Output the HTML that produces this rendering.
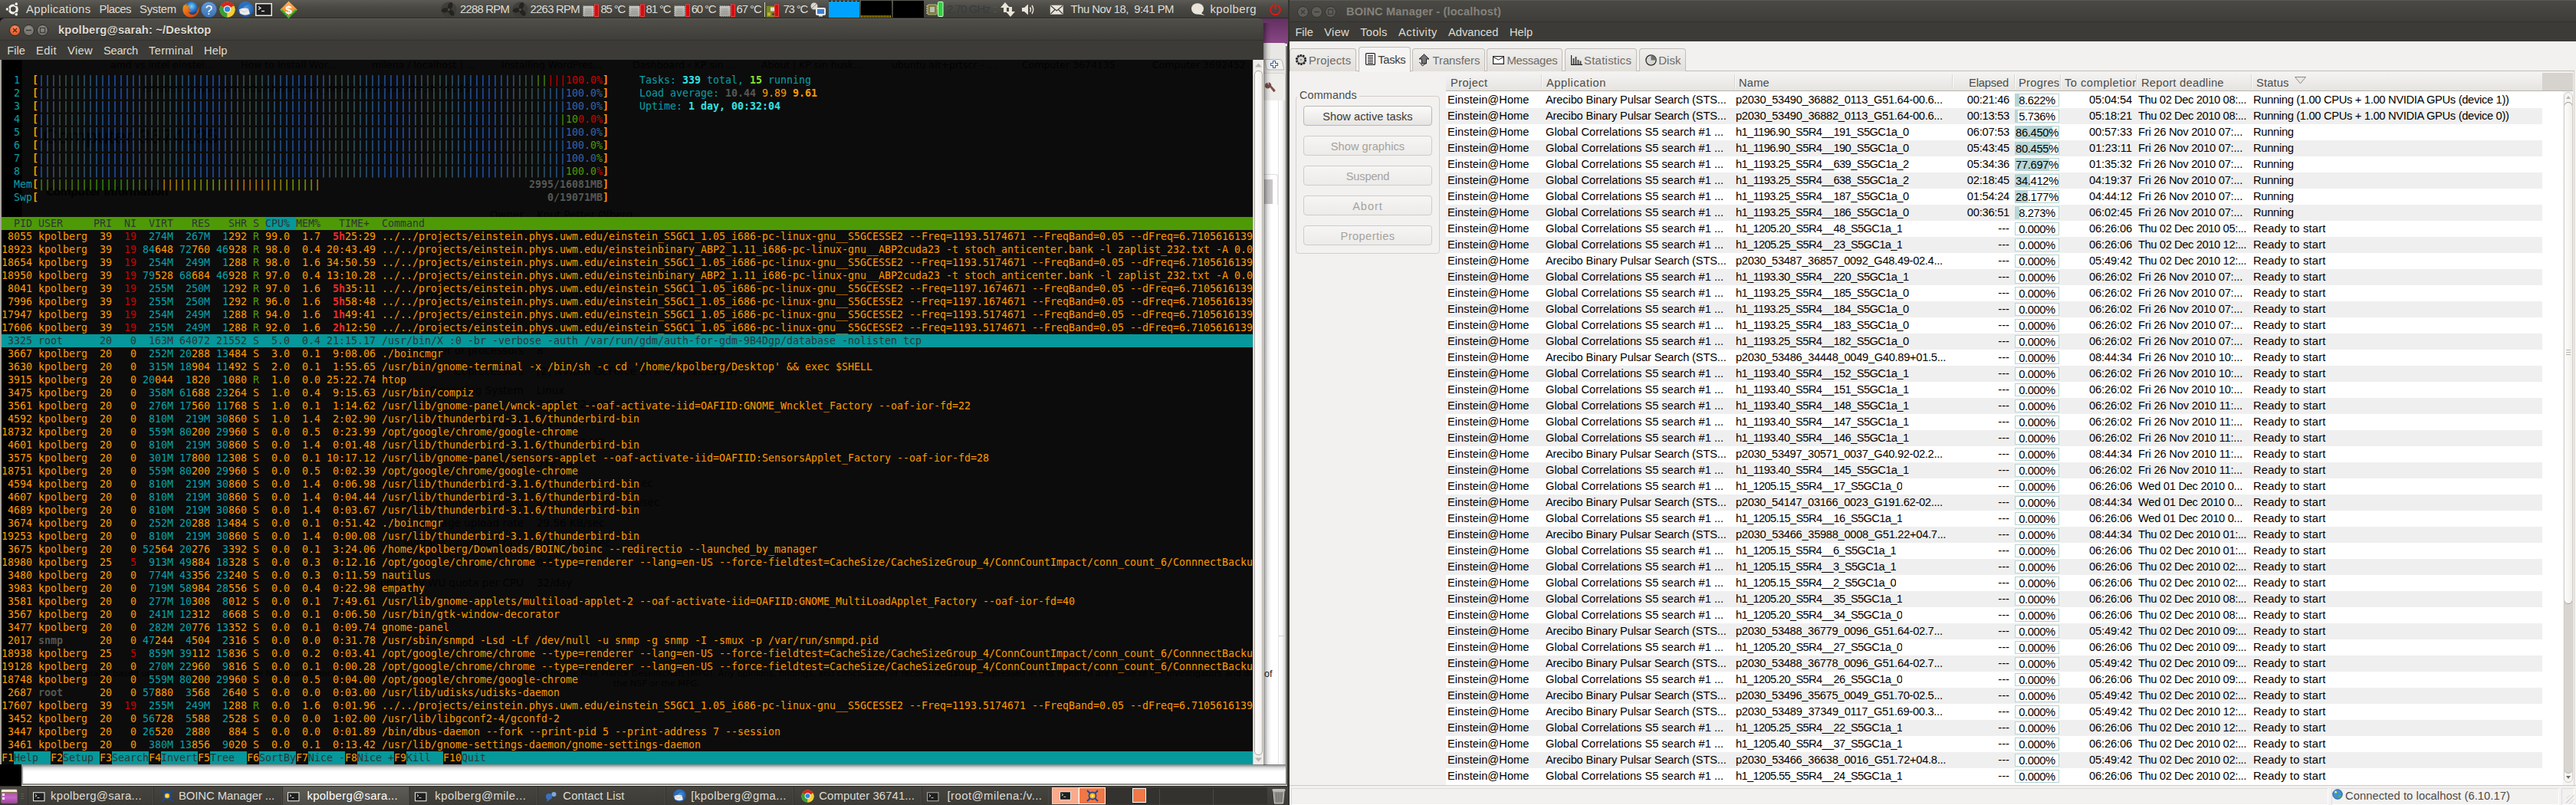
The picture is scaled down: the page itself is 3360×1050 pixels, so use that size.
<!DOCTYPE html>
<html><head><meta charset="utf-8"><title>Desktop</title>
<style>
*{box-sizing:border-box;margin:0;padding:0}
html,body{width:3360px;height:1050px;overflow:hidden;background:#fff}
body{position:relative;font-family:"Liberation Sans",sans-serif;font-size:14.67px;color:#000}
.abs{position:absolute}
#left{position:absolute;left:0;top:0;width:1680px;height:1050px;overflow:hidden;background:#fff}
#right{position:absolute;left:1680px;top:0;width:1680px;height:1050px;overflow:hidden;background:#f2f1f0}
/* top panel */
#tp{position:absolute;left:0;top:0;width:1680px;height:24px;background:linear-gradient(#5b5a54,#4a4943 40%,#3e3d39);border-bottom:1px solid #2b2a27;color:#dfdbd2;font-size:14.9px;line-height:25px;white-space:nowrap}
#tp span.t{position:absolute;top:0}
/* terminal window */
#tw{position:absolute;left:0;top:24px;width:1648px;height:973px;background:#3c3b37;border-radius:6px 6px 0 0;overflow:hidden}
#ttl{position:absolute;left:0;top:0;width:100%;height:28px;background:linear-gradient(#4f4e48,#3e3d39);border-top:1px solid #5e5d56;border-radius:6px 6px 0 0}
#ttl .tt{position:absolute;left:76px;top:0;line-height:28px;color:#dfdbd2;font-weight:bold;font-size:14.6px;text-shadow:0 1px 0 #222}
.wb{position:absolute;top:7px;width:15px;height:15px;border-radius:50%;border:1px solid #2b2a27}
#tmenu{position:absolute;left:0;top:28px;width:100%;height:26px;background:#3c3b37;color:#dfdbd2;line-height:26px;border-top:1px solid #33322f}
#tmenu span,#bmenu span{position:absolute;top:0}
#term{position:absolute;left:2px;top:54px;width:1632px;height:919px;padding-top:1px;background:linear-gradient(90deg,#000 26px,#0c0c0c 27px);color:#fd9a00;font-family:"DejaVu Sans Mono","Liberation Mono",monospace;font-size:13.30px;letter-spacing:-0.0058px;line-height:17px;white-space:pre;overflow:hidden}
#term .ln{height:17px;width:1632px;overflow:hidden;position:relative;z-index:1}
#ghost{position:absolute;left:0;top:0;width:1632px;height:919px;overflow:hidden;color:rgba(0,0,0,.8);font-family:"DejaVu Sans","Liberation Sans",sans-serif;letter-spacing:0;z-index:0;white-space:nowrap}
#ghost div{position:absolute;line-height:1.2}
#term .c{color:#08a0a6}
#term .c2{color:#25c0cc}
#term .C{color:#34e2e2;font-weight:bold}
#term .G{color:#8ae234;font-weight:bold}
#term .g{color:#4e9a06}
#term .r{color:#cc0000}
#term .R{color:#ef2929;font-weight:bold}
#term .b{color:#3465a4}
#term .y{color:#c4a000}
#term .K{color:#555753;font-weight:bold}
#term .B{font-weight:bold}
#term .hdl{background:#4e9a06;color:#2e3436}
#term .hs{background:#06989a;display:inline-block;height:17px;vertical-align:top}
#term .sel{background:#06989a;color:#2e3436}
#term .fkl{background:#06989a}
#term .fk{background:#0c0c0c;color:#fd9a00;display:inline-block;height:17px;vertical-align:top}
#term .fl{color:#2e3436}
/* bottom panel */
#bp{position:absolute;left:0;top:1025px;width:1680px;height:25px;background:linear-gradient(#45443e,#3c3b37);border-top:1px solid #2b2a27;color:#dfdbd2;line-height:25px;white-space:nowrap;font-size:14.9px}
.tb{position:absolute;top:0;height:25px;border-left:1px solid #33322e;border-right:1px solid #4a4943}
.tb span{position:absolute;top:0}
.tb.act{background:linear-gradient(#5d5c55,#4c4b46);color:#fff}
/* BOINC */
#btl{position:absolute;left:0;top:0;width:1680px;height:28px;background:linear-gradient(#4a4944,#3e3d39);border-top:1px solid #5a5953}
#btl .tt{position:absolute;left:76px;top:0;line-height:28px;color:#85827b;font-weight:bold;font-size:14.6px}
#bmenu{position:absolute;left:0;top:28px;width:1680px;height:26px;background:#3c3b37;color:#dfdbd2;line-height:26px;border-top:1px solid #33322f}
.tab{position:absolute;top:63px;height:30px;border:1px solid #c2bdb6;border-bottom:none;border-radius:4px 4px 0 0;background:linear-gradient(#f0efed,#e2dfdb);color:#6d6b67;line-height:31px;font-size:14.9px;white-space:nowrap}
.tab.act{top:61px;height:33px;background:#f5f4f3;color:#3c3b37;z-index:2;line-height:32px}
.tab span{position:absolute;top:0}
#tabline{position:absolute;left:2px;top:92px;width:1676px;height:1px;background:#c2bdb6}
#grp{position:absolute;left:10px;top:125px;width:188px;height:206px;border:1px solid #d3cfc9;border-radius:4px}
#grplbl{position:absolute;left:12px;top:114px;padding:0 3px;background:#f2f1f0;color:#4c4b47;font-size:14.4px;line-height:20px}
.btn{position:absolute;left:20px;width:168px;height:26px;border:1px solid #bcb7b0;border-radius:4px;background:linear-gradient(#fbfbfa,#e6e4e1);text-align:center;line-height:26px;color:#3c3b37;font-size:14.6px}
.btn.dis{color:#a5a29d;border-color:#d0ccc6;background:linear-gradient(#f6f5f4,#ecebe9)}
#thead{position:absolute;left:206px;top:95px;width:1470px;height:24px;background:linear-gradient(#f4f3f2,#e6e4e1);border-bottom:1px solid #b9b5ae;color:#4c4b47;line-height:26px;white-space:nowrap;overflow:hidden}
#thead span{position:absolute;top:0}
#thead i{position:absolute;top:2px;width:1px;height:19px;background:#d9d6d1;border-right:1px solid #fafafa;box-sizing:content-box}
#tbody{position:absolute;left:206px;top:119px;width:1457px;height:905px;background:#fff;overflow:hidden}
.tr{position:absolute;left:0;width:1430px;height:21px;line-height:21px;white-space:nowrap;font-size:14.67px;color:#000}
.tr.odd{background:#efefef}
.tr span{position:absolute;top:0;height:21px;overflow:hidden}
.c1{left:2px}.c2{left:130px}.c3{left:378px}
.c4{left:660px;width:75px;text-align:right}
.c5{left:742px;width:58px;height:17px!important;top:2px!important;border:1px solid #b4d4d2;background:#fff;line-height:17px}
.c5 i{position:absolute;left:0;top:0;height:15px;background:#b9d6d6}
.c5 b{position:absolute;left:0;top:0;width:56px;text-align:center;font-weight:normal;line-height:16px}
.c6{left:800px;width:95px;text-align:right}
.c7{left:903px}.c8{left:1053px}
#sbar{position:absolute;left:0;top:1024px;width:1680px;height:26px;border-top:1px solid #cfcbc5;background:#f2f1f0;color:#4c4b47}
</style></head><body><svg width="0" height="0" style="position:absolute"><defs>
<radialGradient id="gFx" cx="55%" cy="35%" r="60%"><stop offset="0" stop-color="#7fd3f7"></stop><stop offset=".5" stop-color="#2a7fd0"></stop><stop offset="1" stop-color="#12327a"></stop></radialGradient>
<linearGradient id="gFo" x1="0" y1="0" x2="1" y2="1"><stop offset="0" stop-color="#f9a01b"></stop><stop offset=".5" stop-color="#e8600f"></stop><stop offset="1" stop-color="#c93a08"></stop></linearGradient>
<linearGradient id="gHelp" x1="0" y1="0" x2="0" y2="1"><stop offset="0" stop-color="#6a9bd4"></stop><stop offset="1" stop-color="#3a72b5"></stop></linearGradient>
<radialGradient id="gTb" cx="50%" cy="40%" r="60%"><stop offset="0" stop-color="#4f9be0"></stop><stop offset="1" stop-color="#1b4f9a"></stop></radialGradient>
<linearGradient id="gDol" x1="0" y1="0" x2="0" y2="1"><stop offset="0" stop-color="#fbb462"></stop><stop offset="1" stop-color="#f07a12"></stop></linearGradient>
<linearGradient id="gChip" x1="0" y1="0" x2="0" y2="1"><stop offset="0" stop-color="#c4c4c0"></stop><stop offset="1" stop-color="#9d9d98"></stop></linearGradient>
</defs></svg>
<div id="left">
  <!-- area behind/right of terminal -->
  <div class="abs" style="left:0;top:24px;width:40px;height:12px;background:#1c0d19"></div>
  <div class="abs" style="left:1640px;top:24px;width:40px;height:33px;background:linear-gradient(#62305f,#8a4787)"></div>
  <div class="abs" style="left:1648px;top:56px;width:30px;height:969px;background:#e9e7e4;border-radius:0 4px 0 0"></div>
  <div class="abs" style="left:1648px;top:95px;width:28.5px;height:37px;background:#efedea;border:1px solid #d8d5d0;border-left:none;border-radius:0 4px 0 0"></div>
  <div class="abs" style="left:1648px;top:131px;width:28.5px;height:892px;background:#fff"></div>
  <div class="abs" style="left:1668px;top:131px;width:8.5px;height:892px;background:linear-gradient(90deg,rgba(0,0,0,0),rgba(0,0,0,.04) 50%,rgba(0,0,0,.22))"></div><div class="abs" style="left:1666.5px;top:131px;width:1px;height:892px;background:#e4e4e4"></div><div class="abs" style="left:1676.5px;top:60px;width:2.5px;height:964px;background:#7f7d7a"></div>
  <div class="abs" style="left:1679px;top:57px;width:1px;height:968px;background:#34332f"></div>
  <svg class="abs" style="left:1649px;top:76px" width="27" height="16" viewBox="0 0 27 16"><path d="M.5 1.500000H20Q22.500000 1.500000 23.500000 4L26 15H5Q3 15 2.500000 12.500000Z" fill="#f3f2f0" stroke="#bab6af" stroke-width="1"></path><path d="M11.5 3.5H14.5V6.5H17.5V9.5H14.5V12.5H11.5V9.5H8.5V6.5H11.5Z" fill="#f7f9fc" stroke="#3465a4" stroke-width="1.1" stroke-linejoin="round"></path></svg>
  <svg class="abs" style="left:1650px;top:107px" width="14" height="15" viewBox="0 0 14 15"><path d="M3 1.500000A3.200000 3.200000 0 1 0 6.500000 6L11.500000 12.500000 13 11 7.500000 5A3.200000 3.200000 0 0 0 5 1L5.500000 3.500000 3.500000 4.500000Z" fill="#7b5048" stroke="#7b5048" stroke-width="1.200000" stroke-linejoin="round"></path></svg>
  <div class="abs" style="left:1648px;top:227px;width:19px;height:40px;border:1px solid #e1dfdc;border-left:none;border-bottom:none;border-radius:0 3px 0 0"></div>
  <div class="abs" style="left:1649px;top:234px;width:11px;height:32px;background:#c9c8c6"></div>
  <div class="abs" style="left:1649px;top:871px;font-size:12.5px;color:#222;line-height:16px">of</div>
  <div class="abs" style="left:1668px;top:829px;width:8px;height:1px;background:#cfcfcf"></div>
  <div class="abs" style="left:0;top:997px;width:1677px;height:26px;background:#fff"></div>
  <div class="abs" style="left:0;top:1022px;width:1678px;height:2px;background:#8d8b86"></div>
  <div class="abs" style="left:0;top:997px;width:28px;height:28px;background:#000"></div>
  <div class="abs" style="left:28px;top:997px;width:2px;height:26px;background:#9a9894"></div>
  <div class="abs" style="left:30px;top:997px;width:1647px;height:9px;background:linear-gradient(rgba(0,0,0,.5),rgba(0,0,0,.12) 50%,rgba(0,0,0,0))"></div>
  <div class="abs" style="left:1648px;top:30px;width:10px;height:968px;background:linear-gradient(90deg,rgba(0,0,0,.42),rgba(0,0,0,.1) 55%,rgba(0,0,0,0))"></div>

  <div id="tp">
<svg class="abs" style="left:7px;top:2px" width="20" height="20" viewBox="0 0 20 20"><circle cx="10.3" cy="10" r="5" fill="none" stroke="#f3f1ec" stroke-width="3.1"></circle><circle cx="2.60" cy="10.00" r="2.7" fill="#4b4a44"></circle><circle cx="14.15" cy="3.33" r="2.7" fill="#4b4a44"></circle><circle cx="14.15" cy="16.67" r="2.7" fill="#4b4a44"></circle><circle cx="2.40" cy="10.00" r="1.8" fill="#f3f1ec"></circle><circle cx="14.25" cy="3.16" r="1.8" fill="#f3f1ec"></circle><circle cx="14.25" cy="16.84" r="1.8" fill="#f3f1ec"></circle></svg>
<svg class="abs" style="left:236.5px;top:1px" width="24" height="22" viewBox="0 0 24 22"><circle cx="12" cy="10" r="9" fill="url(#gFx)"></circle><path d="M3.5 4.5C1 8 0.5 13.5 3.5 17.5 7 22 14 22.5 18.5 19.5 22.5 16.5 23.5 11 22 7 22 10 21 12 19.5 13.5 20 16 17 18.5 13.5 18 10.5 17.5 9 15.5 9 14c1.5 1 3.5 .5 5-.5-2 0-4.5-1-5-3.5-.5-2 .5-3 1.5-4-1.500000-.5-3.500000 0-4.500000 1 0-1.500000 .5-2.500000 1-3.500000-1.500000 .5-2.500000 1.500000-3.500000 3z" fill="url(#gFo)"></path></svg>
<svg class="abs" style="left:261.5px;top:1.5px" width="21" height="21" viewBox="0 0 21 21"><circle cx="10.5" cy="10.5" r="10.2" fill="url(#gHelp)" stroke="#2f5f9c" stroke-width=".6"></circle><text x="10.5" y="16.5" font-family="Liberation Sans,sans-serif" font-size="17" fill="#fff" text-anchor="middle">?</text></svg>
<svg class="abs" style="left:285.5px;top:1.5px" width="21" height="21" viewBox="0 0 21 21"><circle cx="10.5" cy="10.5" r="10" fill="#f5d33a"></circle><path d="M10.500000 10.500000L1.840000 5.500000A10 10 0 0 1 19.160000 5.500000Z" fill="#d8241c"></path><path d="M10.500000 10.500000L1.840000 5.500000A10 10 0 0 0 10.500000 20.500000Z" fill="#3a9e38"></path><path d="M10.5 10.5L19.16 5.5A10 10 0 0 1 10.5 20.5Z" fill="#f3cf2d"></path><circle cx="10.5" cy="10" r="4.8" fill="#f2f2f2"></circle><circle cx="10.5" cy="10" r="3.6" fill="#2f86e0"></circle></svg>
<svg class="abs" style="left:308.5px;top:1px" width="22" height="22" viewBox="0 0 22 22"><circle cx="11.5" cy="11" r="10.3" fill="url(#gTb)"></circle><path d="M3 9C6 3 14 1 19 5 14 4 9 6 8 10Z" fill="#2a6cc0"></path><path d="M3 11.500000Q8 8 15 10.500000L17 17Q10 20.500000 4 16.500000Z" fill="#efece6"></path><path d="M3 11.500000L10 15 15 10.500000" fill="none" stroke="#c9c4bb" stroke-width=".8"></path></svg>
<svg class="abs" style="left:333px;top:4px" width="22" height="17" viewBox="0 0 22 17"><rect x=".75" y=".75" width="20.5" height="15.5" fill="#1e1e1e" stroke="#e8e8e6" stroke-width="1.5"></rect><path d="M4 4.500000L7 6.500000 4 8.500000" fill="none" stroke="#f2f2f2" stroke-width="1.300000"></path><path d="M8 10.500000H12" stroke="#f2f2f2" stroke-width="1.300000"></path></svg>
<svg class="abs" style="left:364.5px;top:0.5px" width="23" height="23.5" viewBox="0 0 23 23.5"><path d="M11.5 .5L22.5 11.5 11.5 22 .5 11.5Z" fill="url(#gDol)" stroke="#d96a0e" stroke-width=".5"></path><path d="M.6 12.6L3 11 11.5 19.5 20 11 22.4 12.6 11.5 23Z" fill="#46b52e"></path><path d="M2.5 13.500000L4 15M5 16L6.500000 17.500000M7.500000 18.500000L9 20M14 20L15.500000 18.500000M16.500000 17.500000L18 16M19 15L20.500000 13.500000" stroke="#1f7a12" stroke-width=".9"></path><text x="11.5" y="17" font-family="Liberation Sans,sans-serif" font-weight="bold" font-size="15.5" fill="#fff" text-anchor="middle">$</text></svg>
<svg class="abs" style="left:575px;top:2px" width="21" height="21" viewBox="0 0 21 21"><circle cx="10.5" cy="10.5" r="10" fill="#3a3935" opacity=".7"></circle><g fill="#24231f"><ellipse cx="10.5" cy="5.5" rx="3" ry="5" transform="rotate(20 10.5 10.5)"></ellipse><ellipse cx="10.5" cy="5.500000" rx="3" ry="5" transform="rotate(140 10.500000 10.500000)"></ellipse><ellipse cx="10.500000" cy="5.500000" rx="3" ry="5" transform="rotate(260 10.500000 10.500000)"></ellipse></g><circle cx="10.5" cy="10.5" r="1.5" fill="#55544f"></circle></svg>
<svg class="abs" style="left:668px;top:2px" width="21" height="21" viewBox="0 0 21 21"><circle cx="10.5" cy="10.5" r="10" fill="#3a3935" opacity=".7"></circle><g fill="#24231f"><ellipse cx="10.5" cy="5.5" rx="3" ry="5" transform="rotate(20 10.5 10.5)"></ellipse><ellipse cx="10.5" cy="5.500000" rx="3" ry="5" transform="rotate(140 10.500000 10.500000)"></ellipse><ellipse cx="10.500000" cy="5.500000" rx="3" ry="5" transform="rotate(260 10.500000 10.500000)"></ellipse></g><circle cx="10.5" cy="10.5" r="1.5" fill="#55544f"></circle></svg>
<svg class="abs" style="left:760px;top:5px" width="21" height="18" viewBox="0 0 21 18"><rect x="1" y="3" width="13" height="13" fill="url(#gChip)" stroke="#cfcfcb" stroke-width="1.2" stroke-dasharray="1.6 1"></rect><path d="M3.5 7H11.5M3.5 9.5H11.5M3.5 12H11.5" stroke="#8e8e89" stroke-width=".8"></path><rect x="15.5" y="1" width="5" height="15.5" fill="#d40d0d" stroke="#f23c3c" stroke-width="1"></rect></svg>
<svg class="abs" style="left:820px;top:5px" width="21" height="18" viewBox="0 0 21 18"><rect x="1" y="3" width="13" height="13" fill="url(#gChip)" stroke="#cfcfcb" stroke-width="1.2" stroke-dasharray="1.6 1"></rect><path d="M3.5 7H11.5M3.5 9.5H11.5M3.5 12H11.5" stroke="#8e8e89" stroke-width=".8"></path><rect x="15.5" y="1" width="5" height="15.5" fill="#d40d0d" stroke="#f23c3c" stroke-width="1"></rect></svg>
<svg class="abs" style="left:878.5px;top:5px" width="21" height="18" viewBox="0 0 21 18"><rect x="1" y="3" width="13" height="13" fill="url(#gChip)" stroke="#cfcfcb" stroke-width="1.2" stroke-dasharray="1.6 1"></rect><path d="M3.5 7H11.5M3.5 9.5H11.5M3.5 12H11.5" stroke="#8e8e89" stroke-width=".8"></path><rect x="15.5" y="1" width="5" height="15.5" fill="#d40d0d" stroke="#f23c3c" stroke-width="1"></rect></svg>
<svg class="abs" style="left:937.5px;top:5px" width="21" height="18" viewBox="0 0 21 18"><rect x="1" y="3" width="13" height="13" fill="url(#gChip)" stroke="#cfcfcb" stroke-width="1.2" stroke-dasharray="1.6 1"></rect><path d="M3.5 7H11.5M3.5 9.5H11.5M3.5 12H11.5" stroke="#8e8e89" stroke-width=".8"></path><rect x="15.5" y="1" width="5" height="15.5" fill="#d40d0d" stroke="#f23c3c" stroke-width="1"></rect></svg>
<svg class="abs" style="left:999px;top:5px" width="21" height="18" viewBox="0 0 21 18"><rect x=".5" y="2.5" width="10.5" height="15" fill="#7c8b1c" stroke="#4d5a10" stroke-width=".6"></rect><rect x="6" y="4.5" width="5" height="5" fill="#ddd"></rect><rect x="2" y="11.5" width="4" height="4" fill="#c9b13a"></rect><rect x="8" y="12.5" width="4" height="2" fill="#333"></rect><rect x="11.5" y="1" width="5" height="15.5" fill="#d40d0d" stroke="#f23c3c" stroke-width="1"></rect></svg>
<svg class="abs" style="left:1057px;top:2px" width="21" height="20" viewBox="0 0 21 20"><circle cx="5" cy="6" r="4.5" fill="#d9d6cf"></circle><path d="M2 9l6-6" stroke="#8a8780" stroke-width="1"></path><rect x="7.5" y="8.500000" width="12" height="9" rx="1" fill="#dfe6ee" stroke="#f4f4f2" stroke-width="1"></rect><rect x="9" y="10" width="9" height="6" fill="#3f7fd0"></rect><rect x="11" y="18" width="5" height="1.500000" fill="#dcdad5"></rect></svg>
<div class="abs" style="left:1081px;top:1px;width:40.2px;height:22px;background:#00a2ff;border-top:1px dashed #000"></div><div class="abs" style="left:1123px;top:1px;width:39.6px;height:22px;background:#000;background-image:repeating-linear-gradient(90deg,#d8b400 0,#d8b400 1px,#000 1px,#000 2px);background-size:100% 3px;background-position:0 100%;background-repeat:no-repeat"></div><div class="abs" style="left:1164.8px;top:1px;width:40px;height:22px;background:#000"></div><div class="abs" style="left:996.5px;top:3px;width:1.5px;height:19px;background:#cfccc4"></div><div class="abs" style="left:1296px;top:9px;width:4px;height:7px;border-top:1px solid #55544e;border-bottom:1px solid #55544e"></div>
<svg class="abs" style="left:1208px;top:2px" width="23" height="20" viewBox="0 0 23 20"><rect x="2" y="4" width="12" height="13" rx="1" fill="#7a7a3a" stroke="#c9c9a0" stroke-width=".8"></rect><rect x="5" y="7" width="6" height="7" fill="#b9b9b2"></rect><path d="M0 6H2M0 9H2M0 12H2M0 15H2M14 6H16M14 9H16" stroke="#d8d8b0" stroke-width="1"></path><rect x="15.5" y=".5" width="6.5" height="19" rx="1" fill="#2fd13a" stroke="#d9f5d9" stroke-width="1"></rect></svg>
<svg class="abs" style="left:1305px;top:3px" width="19" height="19" viewBox="0 0 19 19"><path d="M6 0L12 7H8V13H4V7H0Z" fill="#e8e4da"></path><path d="M13 19L7 12H11V6H15V12H19Z" fill="#e8e4da"></path></svg>
<svg class="abs" style="left:1333px;top:5px" width="18" height="15" viewBox="0 0 18 15"><path d="M0 5H3L8 .5V14.500000L3 10H0Z" fill="#e8e4da"></path><path d="M10.500000 4.500000Q12.500000 7.500000 10.500000 10.500000M13 2Q16.500000 7.500000 13 13" fill="none" stroke="#e8e4da" stroke-width="1.500000"></path></svg>
<svg class="abs" style="left:1369px;top:6px" width="18.5" height="13.5" viewBox="0 0 18.5 13.5"><rect x=".8" y=".8" width="16.9" height="11.9" rx="1" fill="#e8e4da"></rect><path d="M1.500000 1.500000L9.250000 8 17 1.500000M1.500000 12L7 6.500000M17 12L11.500000 6.500000" fill="none" stroke="#3d3c38" stroke-width="1.100000"></path></svg>
<svg class="abs" style="left:1553.5px;top:4px" width="18" height="17" viewBox="0 0 18 17"><ellipse cx="8" cy="7.5" rx="8" ry="7.3" fill="#e8e4da"></ellipse><path d="M11 12L17.500000 16 9 14.500000Z" fill="#e8e4da"></path></svg>
<svg class="abs" style="left:1655.5px;top:4px" width="15" height="17" viewBox="0 0 15 17"><path d="M4.600000 3.200000A6.300000 6.300000 0 1 0 10.400000 3.200000" fill="none" stroke="#df1818" stroke-width="2" stroke-linecap="round"></path><path d="M7.500000 .8V7.500000" stroke="#df1818" stroke-width="2" stroke-linecap="round"></path></svg>
    <span class="t" style="left: 34px; letter-spacing: 0.35px;">Applications</span>
    <span class="t" style="left: 129.6px; letter-spacing: -0.551px;">Places</span>
    <span class="t" style="left: 182px; letter-spacing: -0.276px;">System</span>
    <span class="t" style="left: 600px; letter-spacing: -0.795px;">2288 RPM</span>
    <span class="t" style="left: 691.5px; letter-spacing: -0.732px;">2263 RPM</span>
    <span class="t" style="left: 783.5px; letter-spacing: -1.184px;">85 °C</span>
    <span class="t" style="left: 842.6px; letter-spacing: -1.104px;">81 °C</span>
    <span class="t" style="left: 901.7px; letter-spacing: -1.124px;">60 °C</span>
    <span class="t" style="left: 960.6px; letter-spacing: -1.084px;">67 °C</span>
    <span class="t" style="left: 1021.5px; letter-spacing: -1.184px;">73 °C</span>
    <span class="t" style="left: 1235px; color: rgb(56, 59, 62); letter-spacing: -0.863px;">2.70 GHz</span>
    <span class="t" style="left: 1396.6px; white-space: pre; letter-spacing: -0.522px;">Thu Nov 18,  9:41 PM</span>
    <span class="t" style="left: 1578.5px; letter-spacing: 0.422px;">kpolberg</span>
  </div>

  <div id="tw">
    <div id="ttl">
      <div class="wb" style="left:12px;background:radial-gradient(circle at 50% 30%,#f58a5e,#df4f1c)"></div>
      <div class="wb" style="left:30px;background:radial-gradient(circle at 50% 30%,#8e8c85,#6a6862)"></div>
      <div class="wb" style="left:48px;background:radial-gradient(circle at 50% 30%,#8e8c85,#6a6862)"></div>
      <svg class="abs" style="left:12px;top:7px" width="52" height="15" viewBox="0 0 52 15"><path d="M5 5L10 10M10 5L5 10" stroke="#5e1f08" stroke-width="1.300000"></path><path d="M22 7.500000H29" stroke="#3c3b37" stroke-width="1.500000"></path><rect x="40.500000" y="4.500000" width="6" height="6" fill="none" stroke="#3c3b37" stroke-width="1.200000"></rect></svg>
      <div class="tt" style="letter-spacing: 0.225px;">kpolberg@sarah: ~/Desktop</div>
    </div>
    <div id="tmenu">
      <span style="left:9.3px">File</span><span style="left: 47px; letter-spacing: 0.434px;">Edit</span><span style="left: 88px; letter-spacing: 0.371px;">View</span><span style="left: 135px; letter-spacing: -0.242px;">Search</span><span style="left: 194px; letter-spacing: 0.326px;">Terminal</span><span style="left: 266px; letter-spacing: 0.086px;">Help</span>
    </div>
    <div id="term"><div id="ghost"><div style="left:142px;top:-1.5px;font-size:12.5px;">amd vs intel einstei…</div><div style="left:312px;top:-1.5px;font-size:12.5px;">How to Install Wor…</div><div style="left:483px;top:-1.5px;font-size:12.5px;">milena / localhost | …</div><div style="left:652px;top:-1.5px;font-size:12.5px;">Installing WordPres…</div><div style="left:823px;top:-1.5px;font-size:12.5px;">Dashboard ‹ KP sin …</div><div style="left:991px;top:-1.5px;font-size:12.5px;">About | KP sin husk…</div><div style="left:1161px;top:-1.5px;font-size:12.5px;">ubuntu alt+prtscr - …</div><div style="left:1331px;top:-1.5px;font-size:12.5px;">Computer 3674135</div><div style="left:1501px;top:-1.5px;font-size:12.5px;">Computer 3692452</div><div style="left:184px;top:28.9px;font-size:13.5px;">einstein.phys.uwm.edu/show_host_detail.php?hostid=3674135</div><div style="left: 54px; top: 85px; font-size: 26px; font-family: &quot;Liberation Sans&quot;, sans-serif; letter-spacing: 0.399px;">Computer 3674135</div><div style="left: 58px; top: 163.6px; font-size: 14px; font-weight: bold; letter-spacing: -0.797px;">Computer information</div><div style="right:951px;top:193.9px;font-size:13.5px;">Owner</div><div style="left:698px;top:193.9px;font-size:13.5px;">Knut Petter Ølberg</div><div style="right:951px;top:220.9px;font-size:13.5px;">Created</div><div style="left:698px;top:220.9px;font-size:13.5px;">17 Nov 2010 19:11:02 UTC</div><div style="right:951px;top:246.9px;font-size:13.5px;">Total Credit</div><div style="left:698px;top:246.9px;font-size:13.5px;">48,158</div><div style="right:951px;top:272.9px;font-size:13.5px;">Recent average credit</div><div style="left:698px;top:272.9px;font-size:13.5px;">1,384.60</div><div style="right:951px;top:298.9px;font-size:13.5px;">Cross project credit</div><div style="left:698px;top:298.9px;font-size:13.5px;">BOINCstats.com Free-DC</div><div style="right:951px;top:328.9px;font-size:13.5px;">CPU type</div><div style="left:698px;top:328.9px;font-size:13.5px;">AuthenticAMD</div><div style="right:951px;top:371.4px;font-size:13.5px;">Number of processors</div><div style="left:698px;top:371.4px;font-size:13.5px;">8</div><div style="right:951px;top:397.9px;font-size:13.5px;">Coprocessors</div><div style="left:698px;top:397.9px;font-size:13.5px;">[2] NVIDIA GeForce GTX 460 (1023MB)</div><div style="right:951px;top:422.9px;font-size:13.5px;">Operating System</div><div style="left:698px;top:422.9px;font-size:13.5px;">Linux</div><div style="left:698px;top:440.9px;font-size:13.5px;">2.6.35-22-generic</div><div style="right:951px;top:464.9px;font-size:13.5px;">BOINC client version</div><div style="left:698px;top:464.9px;font-size:13.5px;">6.10.17</div><div style="right:951px;top:490.9px;font-size:13.5px;">Memory</div><div style="left:698px;top:490.9px;font-size:13.5px;">15704.77 MB</div><div style="right:951px;top:517.9px;font-size:13.5px;">Cache</div><div style="left:698px;top:517.9px;font-size:13.5px;">512 KB</div><div style="right:951px;top:543.9px;font-size:13.5px;">Measured floating point speed</div><div style="left:698px;top:543.9px;font-size:13.5px;">2244.6 million ops/sec</div><div style="right:951px;top:569.4px;font-size:13.5px;">Measured integer speed</div><div style="left:698px;top:569.4px;font-size:13.5px;">2432.09 million ops/sec</div><div style="right:951px;top:595.5px;font-size:13.5px;">Average upload rate</div><div style="left:698px;top:595.5px;font-size:13.5px;">29.56 KB/sec</div><div style="right:951px;top:621.6px;font-size:13.5px;">Average download rate</div><div style="left:698px;top:621.6px;font-size:13.5px;">106.77 KB/sec</div><div style="right:951px;top:647.9px;font-size:13.5px;">Average turnaround time</div><div style="left:698px;top:647.9px;font-size:13.5px;">0.59 days</div><div style="right:951px;top:673.9px;font-size:13.5px;">Maximum daily WU quota per CPU</div><div style="left:698px;top:673.9px;font-size:13.5px;">32/day</div><div style="left:56px;top:794.3px;font-size:11.2px;white-space:nowrap;">This material is based upon work supported by the National Science Foundation (NSF) under Grant PHY-0555655 and by the Max Planck Gesellschaft (MPG). Any opinions, findings, and conclusions or recommendations expressed in this material are those of the investigators and do not necessarily reflect the views of</div><div style="left:798px;top:807.3px;font-size:11.2px;">the NSF or the MPG.</div></div><div class="ln"></div><div class="ln">  <span class="c">1</span>  <span class="B">[</span><span class="b">|||||||||||||||||||||||||||||||||||||||||||||||||||||||||||||||||||||||||||||||||</span><span class="g">||</span><span class="r">|||</span><span class="r">100.0%</span><span class="B">]</span>     <span class="c">Tasks: </span><span class="C">339</span><span class="c"> total, </span><span class="G">15</span><span class="c"> running</span></div><div class="ln">  <span class="c">2</span>  <span class="B">[</span><span class="b">||||||||||||||||||||||||||||||||||||||||||||||||||||||||||||||||||||||||||||||||||||||</span><span class="b">100.0%</span><span class="B">]</span>     <span class="c">Load average: </span><span class="K">10.44</span> 9.89 <span class="B">9.61</span></div><div class="ln">  <span class="c">3</span>  <span class="B">[</span><span class="b">||||||||||||||||||||||||||||||||||||||||||||||||||||||||||||||||||||||||||||||||||||||</span><span class="b">100.0%</span><span class="B">]</span>     <span class="c">Uptime: </span><span class="C">1 day, 00:32:04</span></div><div class="ln">  <span class="c">4</span>  <span class="B">[</span><span class="b">|||||||||||||||||||||||||||||||||||||||||||||||||||||||||||||||||||||||||||||||||||||</span><span class="g">|</span><span class="g">10</span><span class="r">0.0%</span><span class="B">]</span></div><div class="ln">  <span class="c">5</span>  <span class="B">[</span><span class="b">||||||||||||||||||||||||||||||||||||||||||||||||||||||||||||||||||||||||||||||||||||||</span><span class="b">100.0%</span><span class="B">]</span></div><div class="ln">  <span class="c">6</span>  <span class="B">[</span><span class="b">||||||||||||||||||||||||||||||||||||||||||||||||||||||||||||||||||||||||||||||||||||||</span><span class="b">100.</span><span class="g">0%</span><span class="B">]</span></div><div class="ln">  <span class="c">7</span>  <span class="B">[</span><span class="b">||||||||||||||||||||||||||||||||||||||||||||||||||||||||||||||||||||||||||||||||||||||</span><span class="b">100.0</span><span class="g">%</span><span class="B">]</span></div><div class="ln">  <span class="c">8</span>  <span class="B">[</span><span class="b">||||||||||||||||||||||||||||||||||||||||||||||||||||||||||||||||||||||||||||||||||||||</span><span class="g">100.0</span><span class="r">%</span><span class="B">]</span></div><div class="ln">  <span class="c">Mem</span><span class="B">[</span><span class="g">||||||||||||||||||</span><span class="b">||</span><span class="y">||||||||||||||||||||||||||</span>                                  <span class="K">2995/16081MB</span><span class="B">]</span></div><div class="ln">  <span class="c">Swp</span><span class="B">[</span>                                                                                   <span class="K">0/19071MB</span><span class="B">]</span></div><div class="ln"></div><div class="ln hdl"><span class="hd">  PID USER     PRI  NI  VIRT   RES   SHR S <span class="hs">CPU% </span>MEM%   TIME+  Command</span></div><div class="ln"> 8055 kpolberg  39 <span class="r"> 19 </span><span class="c"> 274M </span><span class="c"> 267M </span><span class="c"> 1</span>292 <span class="g">R </span>99.0  1.7  <span class="R">5h</span>25:29 ../../projects/einstein.phys.uwm.edu/einstein_S5GC1_1.05_i686-pc-linux-gnu__S5GCESSE2 --Freq=1193.5174671 --FreqBand=0.05 --dFreq=6.7105616139</div><div class="ln">18923 kpolberg  39 <span class="r"> 19 </span><span class="c">84</span>648 <span class="c">72</span>760 <span class="c">46</span>928 <span class="g">R </span>98.0  0.4 20:43.49 ../../projects/einstein.phys.uwm.edu/einsteinbinary_ABP2_1.11_i686-pc-linux-gnu__ABP2cuda23 -t stoch_anticenter.bank -l zaplist_232.txt -A 0.0</div><div class="ln">18654 kpolberg  39 <span class="r"> 19 </span><span class="c"> 254M </span><span class="c"> 249M </span><span class="c"> 1</span>288 <span class="g">R </span>98.0  1.6 34:50.59 ../../projects/einstein.phys.uwm.edu/einstein_S5GC1_1.05_i686-pc-linux-gnu__S5GCESSE2 --Freq=1193.5174671 --FreqBand=0.05 --dFreq=6.7105616139</div><div class="ln">18950 kpolberg  39 <span class="r"> 19 </span><span class="c">79</span>528 <span class="c">68</span>684 <span class="c">46</span>928 <span class="g">R </span>97.0  0.4 13:10.28 ../../projects/einstein.phys.uwm.edu/einsteinbinary_ABP2_1.11_i686-pc-linux-gnu__ABP2cuda23 -t stoch_anticenter.bank -l zaplist_232.txt -A 0.0</div><div class="ln"> 8041 kpolberg  39 <span class="r"> 19 </span><span class="c"> 255M </span><span class="c"> 250M </span><span class="c"> 1</span>292 <span class="g">R </span>97.0  1.6  <span class="R">5h</span>35:11 ../../projects/einstein.phys.uwm.edu/einstein_S5GC1_1.05_i686-pc-linux-gnu__S5GCESSE2 --Freq=1197.1674671 --FreqBand=0.05 --dFreq=6.7105616139</div><div class="ln"> 7996 kpolberg  39 <span class="r"> 19 </span><span class="c"> 255M </span><span class="c"> 250M </span><span class="c"> 1</span>292 <span class="g">R </span>96.0  1.6  <span class="R">5h</span>58:48 ../../projects/einstein.phys.uwm.edu/einstein_S5GC1_1.05_i686-pc-linux-gnu__S5GCESSE2 --Freq=1197.1674671 --FreqBand=0.05 --dFreq=6.7105616139</div><div class="ln">17947 kpolberg  39 <span class="r"> 19 </span><span class="c"> 254M </span><span class="c"> 249M </span><span class="c"> 1</span>288 <span class="g">R </span>94.0  1.6  <span class="R">1h</span>49:41 ../../projects/einstein.phys.uwm.edu/einstein_S5GC1_1.05_i686-pc-linux-gnu__S5GCESSE2 --Freq=1193.5174671 --FreqBand=0.05 --dFreq=6.7105616139</div><div class="ln">17606 kpolberg  39 <span class="r"> 19 </span><span class="c"> 255M </span><span class="c"> 249M </span><span class="c"> 1</span>288 <span class="g">R </span>92.0  1.6  <span class="R">2h</span>12:50 ../../projects/einstein.phys.uwm.edu/einstein_S5GC1_1.05_i686-pc-linux-gnu__S5GCESSE2 --Freq=1193.5174671 --FreqBand=0.05 --dFreq=6.7105616139</div><div class="ln sel"> 3325 root      20   0  163M 64072 21552 S  5.0  0.4 21:15.17 /usr/bin/X :0 -br -verbose -auth /var/run/gdm/auth-for-gdm-9B4Dgp/database -nolisten tcp</div><div class="ln"> 3667 kpolberg  20   0 <span class="c"> 252M </span><span class="c">20</span>288 <span class="c">13</span>484 S  3.0  0.1  9:08.06 ./boincmgr</div><div class="ln"> 3630 kpolberg  20   0 <span class="c"> 315M </span><span class="c">18</span>904 <span class="c">11</span>492 S  2.0  0.1  1:55.65 /usr/bin/gnome-terminal -x /bin/sh -c cd '/home/kpolberg/Desktop' &amp;&amp; exec $SHELL</div><div class="ln"> 3915 kpolberg  20   0 <span class="c">20</span>044 <span class="c"> 1</span>820 <span class="c"> 1</span>080 <span class="g">R </span> 1.0  0.0 25:22.74 htop</div><div class="ln"> 3475 kpolberg  20   0 <span class="c"> 358M </span><span class="c">61</span>688 <span class="c">23</span>264 S  1.0  0.4  9:15.63 /usr/bin/compiz</div><div class="ln"> 3561 kpolberg  20   0 <span class="c"> 276M </span><span class="c">17</span>560 <span class="c">11</span>768 S  1.0  0.1  1:14.62 /usr/lib/gnome-panel/wnck-applet --oaf-activate-iid=OAFIID:GNOME_Wncklet_Factory --oaf-ior-fd=22</div><div class="ln"> 4592 kpolberg  20   0 <span class="c"> 810M </span><span class="c"> 219M </span><span class="c">30</span>860 S  1.0  1.4  2:02.90 /usr/lib/thunderbird-3.1.6/thunderbird-bin</div><div class="ln">18732 kpolberg  20   0 <span class="c"> 559M </span><span class="c">80</span>200 <span class="c">29</span>960 S  0.0  0.5  0:23.99 /opt/google/chrome/google-chrome</div><div class="ln"> 4601 kpolberg  20   0 <span class="c"> 810M </span><span class="c"> 219M </span><span class="c">30</span>860 S  0.0  1.4  0:01.48 /usr/lib/thunderbird-3.1.6/thunderbird-bin</div><div class="ln"> 3575 kpolberg  20   0 <span class="c"> 301M </span><span class="c">17</span>800 <span class="c">12</span>308 S  0.0  0.1 10:17.12 /usr/lib/gnome-panel/sensors-applet --oaf-activate-iid=OAFIID:SensorsApplet_Factory --oaf-ior-fd=28</div><div class="ln">18751 kpolberg  20   0 <span class="c"> 559M </span><span class="c">80</span>200 <span class="c">29</span>960 S  0.0  0.5  0:02.39 /opt/google/chrome/google-chrome</div><div class="ln"> 4594 kpolberg  20   0 <span class="c"> 810M </span><span class="c"> 219M </span><span class="c">30</span>860 S  0.0  1.4  0:06.98 /usr/lib/thunderbird-3.1.6/thunderbird-bin</div><div class="ln"> 4607 kpolberg  20   0 <span class="c"> 810M </span><span class="c"> 219M </span><span class="c">30</span>860 S  0.0  1.4  0:04.44 /usr/lib/thunderbird-3.1.6/thunderbird-bin</div><div class="ln"> 4689 kpolberg  20   0 <span class="c"> 810M </span><span class="c"> 219M </span><span class="c">30</span>860 S  0.0  1.4  0:03.67 /usr/lib/thunderbird-3.1.6/thunderbird-bin</div><div class="ln"> 3674 kpolberg  20   0 <span class="c"> 252M </span><span class="c">20</span>288 <span class="c">13</span>484 S  0.0  0.1  0:51.42 ./boincmgr</div><div class="ln">19253 kpolberg  20   0 <span class="c"> 810M </span><span class="c"> 219M </span><span class="c">30</span>860 S  0.0  1.4  0:00.08 /usr/lib/thunderbird-3.1.6/thunderbird-bin</div><div class="ln"> 3675 kpolberg  20   0 <span class="c">52</span>564 <span class="c">20</span>276 <span class="c"> 3</span>392 S  0.0  0.1  3:24.06 /home/kpolberg/Downloads/BOINC/boinc --redirectio --launched_by_manager</div><div class="ln">18980 kpolberg  25 <span class="r">  5 </span><span class="c"> 913M </span><span class="c">49</span>884 <span class="c">18</span>328 S  0.0  0.3  0:12.16 /opt/google/chrome/chrome --type=renderer --lang=en-US --force-fieldtest=CacheSize/CacheSizeGroup_4/ConnCountImpact/conn_count_6/ConnnectBacku</div><div class="ln"> 3480 kpolberg  20   0 <span class="c"> 774M </span><span class="c">43</span>356 <span class="c">23</span>240 S  0.0  0.3  0:11.59 nautilus</div><div class="ln"> 3983 kpolberg  20   0 <span class="c"> 719M </span><span class="c">58</span>984 <span class="c">28</span>556 S  0.0  0.4  0:22.98 empathy</div><div class="ln"> 3581 kpolberg  20   0 <span class="c"> 277M </span><span class="c">10</span>308 <span class="c"> 8</span>012 S  0.0  0.1  7:49.61 /usr/lib/gnome-applets/multiload-applet-2 --oaf-activate-iid=OAFIID:GNOME_MultiLoadApplet_Factory --oaf-ior-fd=40</div><div class="ln"> 3567 kpolberg  20   0 <span class="c"> 241M </span><span class="c">12</span>312 <span class="c"> 8</span>668 S  0.0  0.1  0:06.50 /usr/bin/gtk-window-decorator</div><div class="ln"> 3477 kpolberg  20   0 <span class="c"> 282M </span><span class="c">20</span>776 <span class="c">13</span>352 S  0.0  0.1  0:09.74 gnome-panel</div><div class="ln"> 2017 <span class="K">snmp     </span> 20   0 <span class="c">47</span>244 <span class="c"> 4</span>504 <span class="c"> 2</span>316 S  0.0  0.0  0:31.78 /usr/sbin/snmpd -Lsd -Lf /dev/null -u snmp -g snmp -I -smux -p /var/run/snmpd.pid</div><div class="ln">18938 kpolberg  25 <span class="r">  5 </span><span class="c"> 859M </span><span class="c">39</span>112 <span class="c">15</span>836 S  0.0  0.2  0:03.41 /opt/google/chrome/chrome --type=renderer --lang=en-US --force-fieldtest=CacheSize/CacheSizeGroup_4/ConnCountImpact/conn_count_6/ConnnectBacku</div><div class="ln">19128 kpolberg  20   0 <span class="c"> 270M </span><span class="c">22</span>960 <span class="c"> 9</span>816 S  0.0  0.1  0:00.28 /opt/google/chrome/chrome --type=renderer --lang=en-US --force-fieldtest=CacheSize/CacheSizeGroup_4/ConnCountImpact/conn_count_6/ConnnectBacku</div><div class="ln">18748 kpolberg  20   0 <span class="c"> 559M </span><span class="c">80</span>200 <span class="c">29</span>960 S  0.0  0.5  0:04.00 /opt/google/chrome/google-chrome</div><div class="ln"> 2687 <span class="K">root     </span> 20   0 <span class="c">57</span>880 <span class="c"> 3</span>568 <span class="c"> 2</span>640 S  0.0  0.0  0:03.00 /usr/lib/udisks/udisks-daemon</div><div class="ln">17607 kpolberg  39 <span class="r"> 19 </span><span class="c"> 255M </span><span class="c"> 249M </span><span class="c"> 1</span>288 <span class="g">R </span> 0.0  1.6  0:01.96 ../../projects/einstein.phys.uwm.edu/einstein_S5GC1_1.05_i686-pc-linux-gnu__S5GCESSE2 --Freq=1193.5174671 --FreqBand=0.05 --dFreq=6.7105616139</div><div class="ln"> 3452 kpolberg  20   0 <span class="c">56</span>728 <span class="c"> 5</span>588 <span class="c"> 2</span>528 S  0.0  0.0  1:02.00 /usr/lib/libgconf2-4/gconfd-2</div><div class="ln"> 3447 kpolberg  20   0 <span class="c">26</span>520 <span class="c"> 2</span>880   884 S  0.0  0.0  0:01.89 /bin/dbus-daemon --fork --print-pid 5 --print-address 7 --session</div><div class="ln"> 3461 kpolberg  20   0 <span class="c"> 380M </span><span class="c">13</span>856 <span class="c"> 9</span>020 S  0.0  0.1  0:13.42 /usr/lib/gnome-settings-daemon/gnome-settings-daemon</div><div class="ln fkl"><span class="fk">F1</span><span class="fl">Help  </span><span class="fk">F2</span><span class="fl">Setup </span><span class="fk">F3</span><span class="fl">Search</span><span class="fk">F4</span><span class="fl">Invert</span><span class="fk">F5</span><span class="fl">Tree  </span><span class="fk">F6</span><span class="fl">SortBy</span><span class="fk">F7</span><span class="fl">Nice -</span><span class="fk">F8</span><span class="fl">Nice +</span><span class="fk">F9</span><span class="fl">Kill  </span><span class="fk">F10</span><span class="fl">Quit</span></div></div>
    <div class="abs" style="left:0;top:54px;width:1.5px;height:919px;background:#a8a49d"></div>
    <div class="abs" style="left:1634px;top:54px;width:14px;height:919px;background:#eeece9;border-left:1px solid #c9c5be"></div>
    <div class="abs" style="left:1636px;top:68px;width:11px;height:893px;background:linear-gradient(90deg,#fdfdfc,#f1efec);border:1px solid #aaa69f;border-radius:5px"></div>
    <svg class="abs" style="left:1637px;top:58px" width="9" height="6" viewBox="0 0 9 6"><path d="M0 5.500000L4.500000 .5 9 5.500000Z" fill="#b9b5ae"></path></svg>
    <svg class="abs" style="left:1637px;top:964px" width="9" height="6" viewBox="0 0 9 6"><path d="M0 .5L4.500000 5.500000 9 .5Z" fill="#b9b5ae"></path></svg>
  </div>

  <div id="bp">
<div class="abs" style="left:1px;top:3px;width:22px;height:19px;border:1px solid #6d6c55;border-radius:2px;background:linear-gradient(#eeeed2 0,#eeeed2 3px,#7d7a3f 3px,#7d7a3f 4px,#b24fb2 4px,#c468c4 60%,#a93fa9)"></div><div class="abs" style="left:3px;top:9px;width:3px;height:3px;background:#f4e9f4"></div><div class="abs" style="left:3px;top:14px;width:3px;height:3px;background:#f4e9f4"></div>
<div class="abs" style="left:27px;top:9px;width:4px;height:7px;background:repeating-linear-gradient(#5c5b55 0,#5c5b55 1px,rgba(0,0,0,0) 1px,rgba(0,0,0,0) 3px)"></div>
<div class="abs" style="left:1372px;top:1px;width:281px;height:22px;background:#33322e"></div>
<div class="abs" style="left:1372px;top:1px;width:35px;height:21.5px;background:#fbaa8b;border:1px solid #fcc9b3"></div>
<svg class="abs" style="left:1382px;top:6px" width="15" height="12" viewBox="0 0 22 17"><rect x=".75" y=".75" width="20.5" height="15.5" fill="#1e1e1e" stroke="#e8e8e6" stroke-width="1.5"></rect><path d="M4 4.500000L7 6.500000 4 8.500000" fill="none" stroke="#f2f2f2" stroke-width="1.300000"></path><path d="M8 10.500000H12" stroke="#f2f2f2" stroke-width="1.300000"></path></svg>
<div class="abs" style="left:1407px;top:1px;width:35px;height:21.5px;background:#f07746;border:1px solid #fff"></div>
<svg class="abs" style="left:1416px;top:3px" width="18" height="18" viewBox="0 0 18 18"><path d="M2 2L6 6M16 2L12 6M2 16L6 12M16 16L12 12" stroke="#1d4b96" stroke-width="2"></path><circle cx="9" cy="9" r="4.6" fill="none" stroke="#1d4b96" stroke-width="1.6"></circle><circle cx="9" cy="9" r="3.2" fill="#f8b81c"></circle><circle cx="9" cy="9" r="1.6" fill="#fff27a"></circle></svg>
<div class="abs" style="left:1477px;top:2px;width:17.5px;height:18.5px;background:#f07746;border:1px solid #fff"></div>
<div class="abs" style="left:1512px;top:3px;width:1px;height:21px;background:#4b4a45"></div>
<div class="abs" style="left:1582px;top:3px;width:1px;height:21px;background:#4b4a45"></div>
<svg class="abs" style="left:1658px;top:0px" width="20" height="23" viewBox="0 0 20 23"><path d="M3 6H17L15.500000 22H4.500000Z" fill="#8f8d88" stroke="#d5d3ce" stroke-width="1"></path><rect x="1.500000" y="3" width="17" height="3" rx="1" fill="#bdbbb5"></rect><path d="M7 8V20M10 8V20M13 8V20" stroke="#6f6d68" stroke-width="1"></path></svg>
    <div class="tb" style="left:36px;width:164px"><svg class="abs" style="left:6px;top:7px" width="15.5" height="12.5" viewBox="0 0 22 17"><rect x=".75" y=".75" width="20.5" height="15.5" fill="#1e1e1e" stroke="#e8e8e6" stroke-width="1.5"></rect><path d="M4 4.500000L7 6.500000 4 8.500000" fill="none" stroke="#f2f2f2" stroke-width="1.300000"></path><path d="M8 10.500000H12" stroke="#f2f2f2" stroke-width="1.300000"></path></svg><span style="left: 29px; letter-spacing: 0.336px;">kpolberg@sara...</span></div>
    <div class="tb" style="left:200px;width:168px"><svg class="abs" style="left:8px;top:3px" width="18" height="18" viewBox="0 0 18 18"><path d="M2 2L6 6M16 2L12 6M2 16L6 12M16 16L12 12" stroke="#1d4b96" stroke-width="2"></path><circle cx="9" cy="9" r="4.6" fill="none" stroke="#1d4b96" stroke-width="1.6"></circle><circle cx="9" cy="9" r="3.2" fill="#f8b81c"></circle><circle cx="9" cy="9" r="1.6" fill="#fff27a"></circle></svg><span style="left: 32px; letter-spacing: -0.096px;">BOINC Manager ...</span></div>
    <div class="tb act" style="left:368px;width:166px"><svg class="abs" style="left:6px;top:7px" width="15.5" height="12.5" viewBox="0 0 22 17"><rect x=".75" y=".75" width="20.5" height="15.5" fill="#1e1e1e" stroke="#e8e8e6" stroke-width="1.5"></rect><path d="M4 4.500000L7 6.500000 4 8.500000" fill="none" stroke="#f2f2f2" stroke-width="1.300000"></path><path d="M8 10.500000H12" stroke="#f2f2f2" stroke-width="1.300000"></path></svg><span style="left: 31.4px; letter-spacing: 0.311px;">kpolberg@sara...</span></div>
    <div class="tb" style="left:534px;width:167px"><svg class="abs" style="left:6px;top:7px" width="15.5" height="12.5" viewBox="0 0 22 17"><rect x=".75" y=".75" width="20.5" height="15.5" fill="#1e1e1e" stroke="#e8e8e6" stroke-width="1.5"></rect><path d="M4 4.500000L7 6.500000 4 8.500000" fill="none" stroke="#f2f2f2" stroke-width="1.300000"></path><path d="M8 10.500000H12" stroke="#f2f2f2" stroke-width="1.300000"></path></svg><span style="left: 32.3px; letter-spacing: 0.44px;">kpolberg@mile...</span></div>
    <div class="tb" style="left:701px;width:167px"><svg class="abs" style="left:9px;top:4px" width="16" height="17" viewBox="0 0 16 17"><circle cx="5" cy="9" r="4" fill="#3a6fc0"></circle><circle cx="11.500000" cy="6" r="3" fill="#7fa8e0"></circle><path d="M3 12L2 16 6 13Z" fill="#3a6fc0"></path></svg><span style="left: 32.3px; letter-spacing: 0.13px;">Contact List</span></div>
    <div class="tb" style="left:868px;width:167px"><svg class="abs" style="left:8px;top:3px" width="18" height="18" viewBox="0 0 22 22"><circle cx="11.5" cy="11" r="10.3" fill="url(#gTb)"></circle><path d="M3 9C6 3 14 1 19 5 14 4 9 6 8 10Z" fill="#2a6cc0"></path><path d="M3 11.500000Q8 8 15 10.500000L17 17Q10 20.500000 4 16.500000Z" fill="#efece6"></path><path d="M3 11.500000L10 15 15 10.500000" fill="none" stroke="#c9c4bb" stroke-width=".8"></path></svg><span style="left: 32.3px; letter-spacing: 0.427px;">[kpolberg@gma...</span></div>
    <div class="tb" style="left:1035px;width:167px"><svg class="abs" style="left:9px;top:4px" width="17" height="17" viewBox="0 0 21 21"><circle cx="10.5" cy="10.5" r="10" fill="#f5d33a"></circle><path d="M10.500000 10.500000L1.840000 5.500000A10 10 0 0 1 19.160000 5.500000Z" fill="#d8241c"></path><path d="M10.500000 10.500000L1.840000 5.500000A10 10 0 0 0 10.500000 20.500000Z" fill="#3a9e38"></path><path d="M10.5 10.5L19.16 5.5A10 10 0 0 1 10.5 20.5Z" fill="#f3cf2d"></path><circle cx="10.5" cy="10" r="4.8" fill="#f2f2f2"></circle><circle cx="10.5" cy="10" r="3.6" fill="#2f86e0"></circle></svg><span style="left: 32.2px; letter-spacing: 0.086px;">Computer 36741...</span></div>
    <div class="tb" style="left:1202px;width:166px"><svg class="abs" style="left:6px;top:7px" width="15.5" height="12.5" viewBox="0 0 22 17"><rect x=".75" y=".75" width="20.5" height="15.5" fill="#1e1e1e" stroke="#a9a8a4" stroke-width="1.5"></rect><path d="M4 4.500000L7 6.500000 4 8.500000" fill="none" stroke="#f2f2f2" stroke-width="1.300000"></path><path d="M8 10.500000H12" stroke="#f2f2f2" stroke-width="1.300000"></path></svg><span style="left: 32.5px; letter-spacing: 0.449px;">[root@milena:/v...</span></div>
  </div>
</div>

<div id="right">
  <div class="abs" style="left:0;top:0;width:1.5px;height:1050px;background:#34332f;z-index:5"></div>
  <div id="btl">
    <div class="wb" style="left:12px;background:#5f5d58;border-color:#33322f"></div>
    <div class="wb" style="left:30px;background:#5f5d58;border-color:#33322f"></div>
    <div class="wb" style="left:48px;background:#5f5d58;border-color:#33322f"></div>
    <svg class="abs" style="left:12px;top:7px" width="52" height="15" viewBox="0 0 52 15"><path d="M5 5L10 10M10 5L5 10" stroke="#3c3b37" stroke-width="1.300000"></path><path d="M22 7.500000H29" stroke="#3c3b37" stroke-width="1.500000"></path><rect x="40.500000" y="4.500000" width="6" height="6" fill="none" stroke="#3c3b37" stroke-width="1.200000"></rect></svg>
    <div class="tt" style="letter-spacing: 0.154px;">BOINC Manager - (localhost)</div>
  </div>
  <div id="bmenu">
    <span style="left: 9.5px; letter-spacing: -0.081px;">File</span><span style="left: 47.3px; letter-spacing: 0.296px;">View</span><span style="left: 94.3px; letter-spacing: 0.176px;">Tools</span><span style="left: 144px; letter-spacing: 0.572px;">Activity</span><span style="left: 209px; letter-spacing: 0.039px;">Advanced</span><span style="left: 289px; letter-spacing: 0.036px;">Help</span>
  </div>
  <div id="tabline"></div>
  <div class="tab" style="left:2px;width:87px"><svg class="abs" style="left:5.5px;top:6px" width="16" height="16" viewBox="0 0 16 16"><circle cx="8" cy="8" r="6" fill="none" stroke="#1e1e1e" stroke-width="2.2" stroke-dasharray="2.6 1.11"></circle><circle cx="8" cy="8" r="4.9" fill="#d4d2ce" stroke="#1e1e1e" stroke-width="1"></circle><circle cx="8" cy="8" r="1.1" fill="#777"></circle></svg><span style="left: 24px; letter-spacing: 0.188px;">Projects</span></div>
  <div class="tab act" style="left:92px;width:68px"><svg class="abs" style="left:8px;top:7px" width="13" height="16" viewBox="0 0 13 16"><rect x=".6" y=".6" width="11.8" height="14.8" rx="1" fill="#fff" stroke="#222" stroke-width="1.2"></rect><path d="M3 3.5H10M3 5.5H10M3 7.5H10M3 9.5H10M3 11.5H10M3 13.5H10" stroke="#222" stroke-width="1" shape-rendering="crispEdges"></path></svg><span style="left: 24.3px; letter-spacing: -0.392px;">Tasks</span></div>
  <div class="tab" style="left:162px;width:95px"><svg class="abs" style="left:7px;top:6px" width="15" height="17" viewBox="0 0 15 17"><path d="M7.500000 .8L14 7H10.500000V13H4.500000V7H1Z" fill="#777" stroke="#222" stroke-width="1"></path><path d="M1.500000 11L5.500000 16 9 13" fill="none" stroke="#222" stroke-width="1"></path></svg><span style="left: 25.5px; letter-spacing: -0.06px;">Transfers</span></div>
  <div class="tab" style="left:259px;width:99px"><svg class="abs" style="left:7px;top:9px" width="15" height="11" viewBox="0 0 15 11"><rect x=".6" y=".6" width="13.8" height="9.8" fill="#fff" stroke="#222" stroke-width="1.2"></rect><path d="M1 1.500000L7.500000 5 14 1.500000" fill="none" stroke="#222" stroke-width="1"></path></svg><span style="left: 25.4px; letter-spacing: -0.234px;">Messages</span></div>
  <div class="tab" style="left:361px;width:94px"><svg class="abs" style="left:7px;top:8px" width="15" height="13" viewBox="0 0 15 13"><path d="M.6 0V12.400000H15" fill="none" stroke="#222" stroke-width="1.200000"></path><path d="M3.500000 12V4M6.500000 12V2M9.500000 12V6M12.500000 12V7.500000" stroke="#444" stroke-width="1.800000"></path></svg><span style="left: 24px; letter-spacing: 0.272px;">Statistics</span></div>
  <div class="tab" style="left:458px;width:61px"><svg class="abs" style="left:7px;top:7px" width="15" height="15" viewBox="0 0 15 15"><circle cx="7.5" cy="7.5" r="6.6" fill="#d6d6d2" stroke="#2a2a2a" stroke-width="1.3"></circle><path d="M7.5 7.5V.9A6.6 6.6 0 0 1 14.1 7.5Z" fill="#6e6e6a"></path></svg><span style="left: 24.3px; letter-spacing: 0.037px;">Disk</span></div>

  <div id="grp"></div>
  <div id="grplbl"><span style="letter-spacing: 0.153px;">Commands</span></div>
  <div class="btn" style="top:138px"><span style="letter-spacing: 0.035px;">Show active tasks</span></div>
  <div class="btn dis" style="top:177px"><span style="letter-spacing: 0.044px;">Show graphics</span></div>
  <div class="btn dis" style="top:216px"><span style="letter-spacing: -0.146px;">Suspend</span></div>
  <div class="btn dis" style="top:255px"><span style="letter-spacing: 0.962px;">Abort</span></div>
  <div class="btn dis" style="top:294px"><span style="letter-spacing: 0.448px;">Properties</span></div>

  <div id="thead">
    <span style="left: 6px; letter-spacing: 0.396px;">Project</span>
    <span style="left: 131px; letter-spacing: 0.572px;">Application</span>
    <span style="left: 382px; letter-spacing: 0.223px;">Name</span>
    <span style="left: 682px; letter-spacing: -0.138px;">Elapsed</span>
    <span style="left: 747px; letter-spacing: 0.31px;">Progres</span>
    <span style="left: 807px; letter-spacing: 0.488px;">To completior</span>
    <span style="left: 907px; letter-spacing: 0.288px;">Report deadline</span>
    <span style="left: 1057px; letter-spacing: 0.14px;">Status</span>
    <i style="left:124px"></i>
    <i style="left:376px"></i>
    <i style="left:660px"></i>
    <i style="left:741px"></i>
    <i style="left:801px"></i>
    <i style="left:900px"></i>
    <i style="left:1050px"></i>
    <svg class="abs" style="left:1107px;top:5px" width="15" height="10" viewBox="0 0 15 10"><path d="M0.5 0.5H14.5L7.5 9Z" fill="#e9e7e4" stroke="#8f8c86" stroke-width="1"></path></svg>
    <div class="abs" style="left:1430px;top:0;width:40px;height:23px;background:#d6d3cf"></div>
  </div>
  <div id="tbody">
<div class="tr" style="top:1px"><span class="c1" style="letter-spacing: 0.029px;">Einstein@Home</span><span class="c2" style="letter-spacing: -0.153px;">Arecibo Binary Pulsar Search (STS...</span><span class="c3" style="letter-spacing: -0.281px;">p2030_53490_36882_0113_G51.64-00.6...</span><span class="c4" style="letter-spacing: -0.233px;">00:21:46</span><span class="c5"><i style="width:4.8px"></i><b style="letter-spacing: -0.37px;">8.622%</b></span><span class="c6" style="letter-spacing: -0.133px;">05:04:54</span><span class="c7" style="letter-spacing: -0.369px;">Thu 02 Dec 2010 08:...</span><span class="c8" style="letter-spacing: -0.299px;">Running (1.00 CPUs + 1.00 NVIDIA GPUs (device 1))</span></div>
<div class="tr odd" style="top:22px"><span class="c1" style="letter-spacing: 0.029px;">Einstein@Home</span><span class="c2" style="letter-spacing: -0.153px;">Arecibo Binary Pulsar Search (STS...</span><span class="c3" style="letter-spacing: -0.281px;">p2030_53490_36882_0113_G51.64-00.6...</span><span class="c4" style="letter-spacing: -0.233px;">00:13:53</span><span class="c5"><i style="width:3.2px"></i><b style="letter-spacing: -0.37px;">5.736%</b></span><span class="c6" style="letter-spacing: -0.133px;">05:18:21</span><span class="c7" style="letter-spacing: -0.369px;">Thu 02 Dec 2010 08:...</span><span class="c8" style="letter-spacing: -0.299px;">Running (1.00 CPUs + 1.00 NVIDIA GPUs (device 0))</span></div>
<div class="tr" style="top:43px"><span class="c1" style="letter-spacing: 0.029px;">Einstein@Home</span><span class="c2">Global Correlations S5 search #1 ...</span><span class="c3" style="letter-spacing: -0.589px;">h1_1196.90_S5R4__191_S5GC1a_0</span><span class="c4" style="letter-spacing: -0.233px;">06:07:53</span><span class="c5"><i style="width:48.4px"></i><b style="letter-spacing: -0.266px;">86.450%</b></span><span class="c6" style="letter-spacing: -0.133px;">00:57:33</span><span class="c7" style="letter-spacing: -0.225px;">Fri 26 Nov 2010 07:...</span><span class="c8" style="letter-spacing: -0.273px;">Running</span></div>
<div class="tr odd" style="top:64px"><span class="c1" style="letter-spacing: 0.029px;">Einstein@Home</span><span class="c2">Global Correlations S5 search #1 ...</span><span class="c3" style="letter-spacing: -0.589px;">h1_1196.90_S5R4__190_S5GC1a_0</span><span class="c4" style="letter-spacing: -0.233px;">05:43:45</span><span class="c5"><i style="width:45.1px"></i><b style="letter-spacing: -0.266px;">80.455%</b></span><span class="c6">01:23:11</span><span class="c7" style="letter-spacing: -0.225px;">Fri 26 Nov 2010 07:...</span><span class="c8" style="letter-spacing: -0.273px;">Running</span></div>
<div class="tr" style="top:85px"><span class="c1" style="letter-spacing: 0.029px;">Einstein@Home</span><span class="c2">Global Correlations S5 search #1 ...</span><span class="c3" style="letter-spacing: -0.589px;">h1_1193.25_S5R4__639_S5GC1a_2</span><span class="c4" style="letter-spacing: -0.233px;">05:34:36</span><span class="c5"><i style="width:43.5px"></i><b style="letter-spacing: -0.266px;">77.697%</b></span><span class="c6" style="letter-spacing: -0.133px;">01:35:32</span><span class="c7" style="letter-spacing: -0.225px;">Fri 26 Nov 2010 07:...</span><span class="c8" style="letter-spacing: -0.273px;">Running</span></div>
<div class="tr odd" style="top:106px"><span class="c1" style="letter-spacing: 0.029px;">Einstein@Home</span><span class="c2">Global Correlations S5 search #1 ...</span><span class="c3" style="letter-spacing: -0.589px;">h1_1193.25_S5R4__638_S5GC1a_2</span><span class="c4" style="letter-spacing: -0.233px;">02:18:45</span><span class="c5"><i style="width:19.3px"></i><b style="letter-spacing: -0.266px;">34.412%</b></span><span class="c6" style="letter-spacing: -0.133px;">04:19:37</span><span class="c7" style="letter-spacing: -0.225px;">Fri 26 Nov 2010 07:...</span><span class="c8" style="letter-spacing: -0.273px;">Running</span></div>
<div class="tr" style="top:127px"><span class="c1" style="letter-spacing: 0.029px;">Einstein@Home</span><span class="c2">Global Correlations S5 search #1 ...</span><span class="c3" style="letter-spacing: -0.589px;">h1_1193.25_S5R4__187_S5GC1a_0</span><span class="c4" style="letter-spacing: -0.233px;">01:54:24</span><span class="c5"><i style="width:15.8px"></i><b style="letter-spacing: -0.266px;">28.177%</b></span><span class="c6" style="letter-spacing: -0.133px;">04:44:12</span><span class="c7" style="letter-spacing: -0.225px;">Fri 26 Nov 2010 07:...</span><span class="c8" style="letter-spacing: -0.273px;">Running</span></div>
<div class="tr odd" style="top:148px"><span class="c1" style="letter-spacing: 0.029px;">Einstein@Home</span><span class="c2">Global Correlations S5 search #1 ...</span><span class="c3" style="letter-spacing: -0.589px;">h1_1193.25_S5R4__186_S5GC1a_0</span><span class="c4" style="letter-spacing: -0.233px;">00:36:51</span><span class="c5"><i style="width:4.6px"></i><b style="letter-spacing: -0.37px;">8.273%</b></span><span class="c6" style="letter-spacing: -0.133px;">06:02:45</span><span class="c7" style="letter-spacing: -0.225px;">Fri 26 Nov 2010 07:...</span><span class="c8" style="letter-spacing: -0.273px;">Running</span></div>
<div class="tr" style="top:169px"><span class="c1" style="letter-spacing: 0.029px;">Einstein@Home</span><span class="c2">Global Correlations S5 search #1 ...</span><span class="c3" style="letter-spacing: -0.655px;">h1_1205.20_S5R4__48_S5GC1a_1</span><span class="c4">---</span><span class="c5"><i style="width:0.0px"></i><b style="letter-spacing: -0.37px;">0.000%</b></span><span class="c6" style="letter-spacing: -0.133px;">06:26:06</span><span class="c7" style="letter-spacing: -0.369px;">Thu 02 Dec 2010 05:...</span><span class="c8" style="letter-spacing: 0.239px;">Ready to start</span></div>
<div class="tr odd" style="top:190px"><span class="c1" style="letter-spacing: 0.029px;">Einstein@Home</span><span class="c2">Global Correlations S5 search #1 ...</span><span class="c3" style="letter-spacing: -0.655px;">h1_1205.25_S5R4__23_S5GC1a_1</span><span class="c4">---</span><span class="c5"><i style="width:0.0px"></i><b style="letter-spacing: -0.37px;">0.000%</b></span><span class="c6" style="letter-spacing: -0.133px;">06:26:06</span><span class="c7" style="letter-spacing: -0.369px;">Thu 02 Dec 2010 12:...</span><span class="c8" style="letter-spacing: 0.239px;">Ready to start</span></div>
<div class="tr" style="top:211px"><span class="c1" style="letter-spacing: 0.029px;">Einstein@Home</span><span class="c2" style="letter-spacing: -0.153px;">Arecibo Binary Pulsar Search (STS...</span><span class="c3" style="letter-spacing: -0.31px;">p2030_53487_36857_0092_G48.49-02.4...</span><span class="c4">---</span><span class="c5"><i style="width:0.0px"></i><b style="letter-spacing: -0.37px;">0.000%</b></span><span class="c6" style="letter-spacing: -0.133px;">05:49:42</span><span class="c7" style="letter-spacing: -0.369px;">Thu 02 Dec 2010 12:...</span><span class="c8" style="letter-spacing: 0.239px;">Ready to start</span></div>
<div class="tr odd" style="top:232px"><span class="c1" style="letter-spacing: 0.029px;">Einstein@Home</span><span class="c2">Global Correlations S5 search #1 ...</span><span class="c3" style="letter-spacing: -0.589px;">h1_1193.30_S5R4__220_S5GC1a_1</span><span class="c4">---</span><span class="c5"><i style="width:0.0px"></i><b style="letter-spacing: -0.37px;">0.000%</b></span><span class="c6" style="letter-spacing: -0.133px;">06:26:02</span><span class="c7" style="letter-spacing: -0.225px;">Fri 26 Nov 2010 07:...</span><span class="c8" style="letter-spacing: 0.239px;">Ready to start</span></div>
<div class="tr" style="top:253px"><span class="c1" style="letter-spacing: 0.029px;">Einstein@Home</span><span class="c2">Global Correlations S5 search #1 ...</span><span class="c3" style="letter-spacing: -0.589px;">h1_1193.25_S5R4__185_S5GC1a_0</span><span class="c4">---</span><span class="c5"><i style="width:0.0px"></i><b style="letter-spacing: -0.37px;">0.000%</b></span><span class="c6" style="letter-spacing: -0.133px;">06:26:02</span><span class="c7" style="letter-spacing: -0.225px;">Fri 26 Nov 2010 07:...</span><span class="c8" style="letter-spacing: 0.239px;">Ready to start</span></div>
<div class="tr odd" style="top:274px"><span class="c1" style="letter-spacing: 0.029px;">Einstein@Home</span><span class="c2">Global Correlations S5 search #1 ...</span><span class="c3" style="letter-spacing: -0.589px;">h1_1193.25_S5R4__184_S5GC1a_0</span><span class="c4">---</span><span class="c5"><i style="width:0.0px"></i><b style="letter-spacing: -0.37px;">0.000%</b></span><span class="c6" style="letter-spacing: -0.133px;">06:26:02</span><span class="c7" style="letter-spacing: -0.225px;">Fri 26 Nov 2010 07:...</span><span class="c8" style="letter-spacing: 0.239px;">Ready to start</span></div>
<div class="tr" style="top:295px"><span class="c1" style="letter-spacing: 0.029px;">Einstein@Home</span><span class="c2">Global Correlations S5 search #1 ...</span><span class="c3" style="letter-spacing: -0.589px;">h1_1193.25_S5R4__183_S5GC1a_0</span><span class="c4">---</span><span class="c5"><i style="width:0.0px"></i><b style="letter-spacing: -0.37px;">0.000%</b></span><span class="c6" style="letter-spacing: -0.133px;">06:26:02</span><span class="c7" style="letter-spacing: -0.225px;">Fri 26 Nov 2010 07:...</span><span class="c8" style="letter-spacing: 0.239px;">Ready to start</span></div>
<div class="tr odd" style="top:316px"><span class="c1" style="letter-spacing: 0.029px;">Einstein@Home</span><span class="c2">Global Correlations S5 search #1 ...</span><span class="c3" style="letter-spacing: -0.589px;">h1_1193.25_S5R4__182_S5GC1a_0</span><span class="c4">---</span><span class="c5"><i style="width:0.0px"></i><b style="letter-spacing: -0.37px;">0.000%</b></span><span class="c6" style="letter-spacing: -0.133px;">06:26:02</span><span class="c7" style="letter-spacing: -0.225px;">Fri 26 Nov 2010 07:...</span><span class="c8" style="letter-spacing: 0.239px;">Ready to start</span></div>
<div class="tr" style="top:337px"><span class="c1" style="letter-spacing: 0.029px;">Einstein@Home</span><span class="c2" style="letter-spacing: -0.153px;">Arecibo Binary Pulsar Search (STS...</span><span class="c3" style="letter-spacing: -0.293px;">p2030_53486_34448_0049_G40.89+01.5...</span><span class="c4">---</span><span class="c5"><i style="width:0.0px"></i><b style="letter-spacing: -0.37px;">0.000%</b></span><span class="c6" style="letter-spacing: -0.133px;">08:44:34</span><span class="c7" style="letter-spacing: -0.225px;">Fri 26 Nov 2010 10:...</span><span class="c8" style="letter-spacing: 0.239px;">Ready to start</span></div>
<div class="tr odd" style="top:358px"><span class="c1" style="letter-spacing: 0.029px;">Einstein@Home</span><span class="c2">Global Correlations S5 search #1 ...</span><span class="c3" style="letter-spacing: -0.589px;">h1_1193.40_S5R4__152_S5GC1a_1</span><span class="c4">---</span><span class="c5"><i style="width:0.0px"></i><b style="letter-spacing: -0.37px;">0.000%</b></span><span class="c6" style="letter-spacing: -0.133px;">06:26:02</span><span class="c7" style="letter-spacing: -0.225px;">Fri 26 Nov 2010 10:...</span><span class="c8" style="letter-spacing: 0.239px;">Ready to start</span></div>
<div class="tr" style="top:379px"><span class="c1" style="letter-spacing: 0.029px;">Einstein@Home</span><span class="c2">Global Correlations S5 search #1 ...</span><span class="c3" style="letter-spacing: -0.589px;">h1_1193.40_S5R4__151_S5GC1a_1</span><span class="c4">---</span><span class="c5"><i style="width:0.0px"></i><b style="letter-spacing: -0.37px;">0.000%</b></span><span class="c6" style="letter-spacing: -0.133px;">06:26:02</span><span class="c7" style="letter-spacing: -0.225px;">Fri 26 Nov 2010 10:...</span><span class="c8" style="letter-spacing: 0.239px;">Ready to start</span></div>
<div class="tr odd" style="top:400px"><span class="c1" style="letter-spacing: 0.029px;">Einstein@Home</span><span class="c2">Global Correlations S5 search #1 ...</span><span class="c3" style="letter-spacing: -0.589px;">h1_1193.40_S5R4__148_S5GC1a_1</span><span class="c4">---</span><span class="c5"><i style="width:0.0px"></i><b style="letter-spacing: -0.37px;">0.000%</b></span><span class="c6" style="letter-spacing: -0.133px;">06:26:02</span><span class="c7" style="letter-spacing: -0.175px;">Fri 26 Nov 2010 11:...</span><span class="c8" style="letter-spacing: 0.239px;">Ready to start</span></div>
<div class="tr" style="top:421px"><span class="c1" style="letter-spacing: 0.029px;">Einstein@Home</span><span class="c2">Global Correlations S5 search #1 ...</span><span class="c3" style="letter-spacing: -0.589px;">h1_1193.40_S5R4__147_S5GC1a_1</span><span class="c4">---</span><span class="c5"><i style="width:0.0px"></i><b style="letter-spacing: -0.37px;">0.000%</b></span><span class="c6" style="letter-spacing: -0.133px;">06:26:02</span><span class="c7" style="letter-spacing: -0.175px;">Fri 26 Nov 2010 11:...</span><span class="c8" style="letter-spacing: 0.239px;">Ready to start</span></div>
<div class="tr odd" style="top:442px"><span class="c1" style="letter-spacing: 0.029px;">Einstein@Home</span><span class="c2">Global Correlations S5 search #1 ...</span><span class="c3" style="letter-spacing: -0.589px;">h1_1193.40_S5R4__146_S5GC1a_1</span><span class="c4">---</span><span class="c5"><i style="width:0.0px"></i><b style="letter-spacing: -0.37px;">0.000%</b></span><span class="c6" style="letter-spacing: -0.133px;">06:26:02</span><span class="c7" style="letter-spacing: -0.175px;">Fri 26 Nov 2010 11:...</span><span class="c8" style="letter-spacing: 0.239px;">Ready to start</span></div>
<div class="tr" style="top:463px"><span class="c1" style="letter-spacing: 0.029px;">Einstein@Home</span><span class="c2" style="letter-spacing: -0.153px;">Arecibo Binary Pulsar Search (STS...</span><span class="c3" style="letter-spacing: -0.31px;">p2030_53497_30571_0037_G40.92-02.2...</span><span class="c4">---</span><span class="c5"><i style="width:0.0px"></i><b style="letter-spacing: -0.37px;">0.000%</b></span><span class="c6" style="letter-spacing: -0.133px;">08:44:34</span><span class="c7" style="letter-spacing: -0.175px;">Fri 26 Nov 2010 11:...</span><span class="c8" style="letter-spacing: 0.239px;">Ready to start</span></div>
<div class="tr odd" style="top:484px"><span class="c1" style="letter-spacing: 0.029px;">Einstein@Home</span><span class="c2">Global Correlations S5 search #1 ...</span><span class="c3" style="letter-spacing: -0.589px;">h1_1193.40_S5R4__145_S5GC1a_1</span><span class="c4">---</span><span class="c5"><i style="width:0.0px"></i><b style="letter-spacing: -0.37px;">0.000%</b></span><span class="c6" style="letter-spacing: -0.133px;">06:26:02</span><span class="c7" style="letter-spacing: -0.175px;">Fri 26 Nov 2010 11:...</span><span class="c8" style="letter-spacing: 0.239px;">Ready to start</span></div>
<div class="tr" style="top:505px"><span class="c1" style="letter-spacing: 0.029px;">Einstein@Home</span><span class="c2">Global Correlations S5 search #1 ...</span><span class="c3" style="letter-spacing: -0.655px;">h1_1205.15_S5R4__17_S5GC1a_0</span><span class="c4">---</span><span class="c5"><i style="width:0.0px"></i><b style="letter-spacing: -0.37px;">0.000%</b></span><span class="c6" style="letter-spacing: -0.133px;">06:26:06</span><span class="c7" style="letter-spacing: -0.275px;">Wed 01 Dec 2010 0...</span><span class="c8" style="letter-spacing: 0.239px;">Ready to start</span></div>
<div class="tr odd" style="top:526px"><span class="c1" style="letter-spacing: 0.029px;">Einstein@Home</span><span class="c2" style="letter-spacing: -0.153px;">Arecibo Binary Pulsar Search (STS...</span><span class="c3" style="letter-spacing: -0.31px;">p2030_54147_03166_0023_G191.62-02....</span><span class="c4">---</span><span class="c5"><i style="width:0.0px"></i><b style="letter-spacing: -0.37px;">0.000%</b></span><span class="c6" style="letter-spacing: -0.133px;">08:44:34</span><span class="c7" style="letter-spacing: -0.275px;">Wed 01 Dec 2010 0...</span><span class="c8" style="letter-spacing: 0.239px;">Ready to start</span></div>
<div class="tr" style="top:547px"><span class="c1" style="letter-spacing: 0.029px;">Einstein@Home</span><span class="c2">Global Correlations S5 search #1 ...</span><span class="c3" style="letter-spacing: -0.655px;">h1_1205.15_S5R4__16_S5GC1a_1</span><span class="c4">---</span><span class="c5"><i style="width:0.0px"></i><b style="letter-spacing: -0.37px;">0.000%</b></span><span class="c6" style="letter-spacing: -0.133px;">06:26:06</span><span class="c7" style="letter-spacing: -0.275px;">Wed 01 Dec 2010 0...</span><span class="c8" style="letter-spacing: 0.239px;">Ready to start</span></div>
<div class="tr odd" style="top:568px"><span class="c1" style="letter-spacing: 0.029px;">Einstein@Home</span><span class="c2" style="letter-spacing: -0.153px;">Arecibo Binary Pulsar Search (STS...</span><span class="c3" style="letter-spacing: -0.293px;">p2030_53466_35988_0008_G51.22+04.7...</span><span class="c4">---</span><span class="c5"><i style="width:0.0px"></i><b style="letter-spacing: -0.37px;">0.000%</b></span><span class="c6" style="letter-spacing: -0.133px;">08:44:34</span><span class="c7" style="letter-spacing: -0.369px;">Thu 02 Dec 2010 01:...</span><span class="c8" style="letter-spacing: 0.239px;">Ready to start</span></div>
<div class="tr" style="top:589px"><span class="c1" style="letter-spacing: 0.029px;">Einstein@Home</span><span class="c2">Global Correlations S5 search #1 ...</span><span class="c3" style="letter-spacing: -0.681px;">h1_1205.15_S5R4__6_S5GC1a_1</span><span class="c4">---</span><span class="c5"><i style="width:0.0px"></i><b style="letter-spacing: -0.37px;">0.000%</b></span><span class="c6" style="letter-spacing: -0.133px;">06:26:06</span><span class="c7" style="letter-spacing: -0.369px;">Thu 02 Dec 2010 01:...</span><span class="c8" style="letter-spacing: 0.239px;">Ready to start</span></div>
<div class="tr odd" style="top:610px"><span class="c1" style="letter-spacing: 0.029px;">Einstein@Home</span><span class="c2">Global Correlations S5 search #1 ...</span><span class="c3" style="letter-spacing: -0.681px;">h1_1205.15_S5R4__3_S5GC1a_1</span><span class="c4">---</span><span class="c5"><i style="width:0.0px"></i><b style="letter-spacing: -0.37px;">0.000%</b></span><span class="c6" style="letter-spacing: -0.133px;">06:26:06</span><span class="c7" style="letter-spacing: -0.369px;">Thu 02 Dec 2010 02:...</span><span class="c8" style="letter-spacing: 0.239px;">Ready to start</span></div>
<div class="tr" style="top:631px"><span class="c1" style="letter-spacing: 0.029px;">Einstein@Home</span><span class="c2">Global Correlations S5 search #1 ...</span><span class="c3" style="letter-spacing: -0.681px;">h1_1205.15_S5R4__2_S5GC1a_0</span><span class="c4">---</span><span class="c5"><i style="width:0.0px"></i><b style="letter-spacing: -0.37px;">0.000%</b></span><span class="c6" style="letter-spacing: -0.133px;">06:26:06</span><span class="c7" style="letter-spacing: -0.369px;">Thu 02 Dec 2010 02:...</span><span class="c8" style="letter-spacing: 0.239px;">Ready to start</span></div>
<div class="tr odd" style="top:652px"><span class="c1" style="letter-spacing: 0.029px;">Einstein@Home</span><span class="c2">Global Correlations S5 search #1 ...</span><span class="c3" style="letter-spacing: -0.655px;">h1_1205.20_S5R4__35_S5GC1a_1</span><span class="c4">---</span><span class="c5"><i style="width:0.0px"></i><b style="letter-spacing: -0.37px;">0.000%</b></span><span class="c6" style="letter-spacing: -0.133px;">06:26:06</span><span class="c7" style="letter-spacing: -0.369px;">Thu 02 Dec 2010 08:...</span><span class="c8" style="letter-spacing: 0.239px;">Ready to start</span></div>
<div class="tr" style="top:673px"><span class="c1" style="letter-spacing: 0.029px;">Einstein@Home</span><span class="c2">Global Correlations S5 search #1 ...</span><span class="c3" style="letter-spacing: -0.655px;">h1_1205.20_S5R4__34_S5GC1a_0</span><span class="c4">---</span><span class="c5"><i style="width:0.0px"></i><b style="letter-spacing: -0.37px;">0.000%</b></span><span class="c6" style="letter-spacing: -0.133px;">06:26:06</span><span class="c7" style="letter-spacing: -0.369px;">Thu 02 Dec 2010 08:...</span><span class="c8" style="letter-spacing: 0.239px;">Ready to start</span></div>
<div class="tr odd" style="top:694px"><span class="c1" style="letter-spacing: 0.029px;">Einstein@Home</span><span class="c2" style="letter-spacing: -0.153px;">Arecibo Binary Pulsar Search (STS...</span><span class="c3" style="letter-spacing: -0.31px;">p2030_53488_36779_0096_G51.64-02.7...</span><span class="c4">---</span><span class="c5"><i style="width:0.0px"></i><b style="letter-spacing: -0.37px;">0.000%</b></span><span class="c6" style="letter-spacing: -0.133px;">05:49:42</span><span class="c7" style="letter-spacing: -0.369px;">Thu 02 Dec 2010 09:...</span><span class="c8" style="letter-spacing: 0.239px;">Ready to start</span></div>
<div class="tr" style="top:715px"><span class="c1" style="letter-spacing: 0.029px;">Einstein@Home</span><span class="c2">Global Correlations S5 search #1 ...</span><span class="c3" style="letter-spacing: -0.655px;">h1_1205.20_S5R4__27_S5GC1a_0</span><span class="c4">---</span><span class="c5"><i style="width:0.0px"></i><b style="letter-spacing: -0.37px;">0.000%</b></span><span class="c6" style="letter-spacing: -0.133px;">06:26:06</span><span class="c7" style="letter-spacing: -0.369px;">Thu 02 Dec 2010 09:...</span><span class="c8" style="letter-spacing: 0.239px;">Ready to start</span></div>
<div class="tr odd" style="top:736px"><span class="c1" style="letter-spacing: 0.029px;">Einstein@Home</span><span class="c2" style="letter-spacing: -0.153px;">Arecibo Binary Pulsar Search (STS...</span><span class="c3" style="letter-spacing: -0.31px;">p2030_53488_36778_0096_G51.64-02.7...</span><span class="c4">---</span><span class="c5"><i style="width:0.0px"></i><b style="letter-spacing: -0.37px;">0.000%</b></span><span class="c6" style="letter-spacing: -0.133px;">05:49:42</span><span class="c7" style="letter-spacing: -0.369px;">Thu 02 Dec 2010 09:...</span><span class="c8" style="letter-spacing: 0.239px;">Ready to start</span></div>
<div class="tr" style="top:757px"><span class="c1" style="letter-spacing: 0.029px;">Einstein@Home</span><span class="c2">Global Correlations S5 search #1 ...</span><span class="c3" style="letter-spacing: -0.655px;">h1_1205.20_S5R4__26_S5GC1a_0</span><span class="c4">---</span><span class="c5"><i style="width:0.0px"></i><b style="letter-spacing: -0.37px;">0.000%</b></span><span class="c6" style="letter-spacing: -0.133px;">06:26:06</span><span class="c7" style="letter-spacing: -0.369px;">Thu 02 Dec 2010 09:...</span><span class="c8" style="letter-spacing: 0.239px;">Ready to start</span></div>
<div class="tr odd" style="top:778px"><span class="c1" style="letter-spacing: 0.029px;">Einstein@Home</span><span class="c2" style="letter-spacing: -0.153px;">Arecibo Binary Pulsar Search (STS...</span><span class="c3" style="letter-spacing: -0.31px;">p2030_53496_35675_0049_G51.70-02.5...</span><span class="c4">---</span><span class="c5"><i style="width:0.0px"></i><b style="letter-spacing: -0.37px;">0.000%</b></span><span class="c6" style="letter-spacing: -0.133px;">05:49:42</span><span class="c7" style="letter-spacing: -0.369px;">Thu 02 Dec 2010 02:...</span><span class="c8" style="letter-spacing: 0.239px;">Ready to start</span></div>
<div class="tr" style="top:799px"><span class="c1" style="letter-spacing: 0.029px;">Einstein@Home</span><span class="c2" style="letter-spacing: -0.153px;">Arecibo Binary Pulsar Search (STS...</span><span class="c3" style="letter-spacing: -0.281px;">p2030_53489_37349_0117_G51.69-00.3...</span><span class="c4">---</span><span class="c5"><i style="width:0.0px"></i><b style="letter-spacing: -0.37px;">0.000%</b></span><span class="c6" style="letter-spacing: -0.133px;">05:49:42</span><span class="c7" style="letter-spacing: -0.369px;">Thu 02 Dec 2010 12:...</span><span class="c8" style="letter-spacing: 0.239px;">Ready to start</span></div>
<div class="tr odd" style="top:820px"><span class="c1" style="letter-spacing: 0.029px;">Einstein@Home</span><span class="c2">Global Correlations S5 search #1 ...</span><span class="c3" style="letter-spacing: -0.655px;">h1_1205.25_S5R4__22_S5GC1a_1</span><span class="c4">---</span><span class="c5"><i style="width:0.0px"></i><b style="letter-spacing: -0.37px;">0.000%</b></span><span class="c6" style="letter-spacing: -0.133px;">06:26:06</span><span class="c7" style="letter-spacing: -0.369px;">Thu 02 Dec 2010 12:...</span><span class="c8" style="letter-spacing: 0.239px;">Ready to start</span></div>
<div class="tr" style="top:841px"><span class="c1" style="letter-spacing: 0.029px;">Einstein@Home</span><span class="c2">Global Correlations S5 search #1 ...</span><span class="c3" style="letter-spacing: -0.655px;">h1_1205.40_S5R4__37_S5GC1a_1</span><span class="c4">---</span><span class="c5"><i style="width:0.0px"></i><b style="letter-spacing: -0.37px;">0.000%</b></span><span class="c6" style="letter-spacing: -0.133px;">06:26:06</span><span class="c7" style="letter-spacing: -0.369px;">Thu 02 Dec 2010 02:...</span><span class="c8" style="letter-spacing: 0.239px;">Ready to start</span></div>
<div class="tr odd" style="top:862px"><span class="c1" style="letter-spacing: 0.029px;">Einstein@Home</span><span class="c2" style="letter-spacing: -0.153px;">Arecibo Binary Pulsar Search (STS...</span><span class="c3" style="letter-spacing: -0.293px;">p2030_53466_36638_0016_G51.72+04.8...</span><span class="c4">---</span><span class="c5"><i style="width:0.0px"></i><b style="letter-spacing: -0.37px;">0.000%</b></span><span class="c6" style="letter-spacing: -0.133px;">05:49:42</span><span class="c7" style="letter-spacing: -0.369px;">Thu 02 Dec 2010 02:...</span><span class="c8" style="letter-spacing: 0.239px;">Ready to start</span></div>
<div class="tr" style="top:883px"><span class="c1" style="letter-spacing: 0.029px;">Einstein@Home</span><span class="c2">Global Correlations S5 search #1 ...</span><span class="c3" style="letter-spacing: -0.655px;">h1_1205.55_S5R4__24_S5GC1a_1</span><span class="c4">---</span><span class="c5"><i style="width:0.0px"></i><b style="letter-spacing: -0.37px;">0.000%</b></span><span class="c6" style="letter-spacing: -0.133px;">06:26:06</span><span class="c7" style="letter-spacing: -0.369px;">Thu 02 Dec 2010 02:...</span><span class="c8" style="letter-spacing: 0.239px;">Ready to start</span></div>
  </div>
  <!-- v scrollbar -->
  <div class="abs" style="left:1663px;top:119px;width:14px;height:905px;background:#f6f5f4"></div>
  <div class="abs" style="left:1664px;top:133px;width:12px;height:876px;background:#d8d5d1;border:1px solid #bdb9b3;border-radius:6px"></div>
  <div class="abs" style="left:1664px;top:133px;width:12px;height:655px;background:linear-gradient(90deg,#fdfdfc,#f1efec);border:1px solid #aaa69f;border-radius:6px"></div>
  <div class="abs" style="left:1667px;top:456px;width:6px;height:7px;background:repeating-linear-gradient(#b5b1aa 0,#b5b1aa 1px,rgba(0,0,0,0) 1px,rgba(0,0,0,0) 3px)"></div>
  <div class="abs" style="left:1664px;top:120px;width:12px;height:901px;border:1px solid #cfcbc5;border-radius:6px"></div><svg class="abs" style="left:1667px;top:125px" width="6" height="4" viewBox="0 0 6 4"><path d="M0 4L3 0 6 4Z" fill="#b9b5ae"></path></svg>
  <svg class="abs" style="left:1667px;top:1012px" width="6" height="4" viewBox="0 0 6 4"><path d="M0 0L3 4 6 0Z" fill="#6f6c67"></path></svg>
  <div class="abs" style="left:1px;top:93px;width:1px;height:931px;background:#d5d1cb"></div>
  <div class="abs" style="left:1677px;top:93px;width:1px;height:931px;background:#d5d1cb"></div>
  <div id="sbar">
    <div class="abs" style="left:4px;top:3px;width:1353px;height:22px;border:1px solid #e0ddd8;border-right-color:#fff;border-bottom-color:#fff"></div><div class="abs" style="left:1361px;top:3px;width:297px;height:22px;border:1px solid #e0ddd8;border-right-color:#fff;border-bottom-color:#fff"></div><div class="abs" style="left:1661px;top:3px;width:17px;height:22px;border:1px solid #e0ddd8;border-right-color:#fff;border-bottom-color:#fff"></div>
    <svg class="abs" style="left:1362px;top:4px" width="14" height="14" viewBox="0 0 14 14"><circle cx="7" cy="7" r="6.3" fill="#3f8fd6" stroke="#1d4f91" stroke-width=".8"></circle><path d="M3 3.500000Q6 2 7.500000 4.500000 6 7 4 6.500000ZM8 8Q10.500000 7 11.500000 9.500000 10 12 8.500000 11Z" fill="#5cb531"></path><circle cx="4.500000" cy="4" r="1.500000" fill="#fff" opacity=".7"></circle></svg>
    <div class="abs" style="left:1667px;top:12px;width:11px;height:12px;background:repeating-linear-gradient(135deg,rgba(0,0,0,0) 0,rgba(0,0,0,0) 3px,#d9d6d1 3px,#d9d6d1 4px)"></div>
    <div class="abs" style="left: 1379px; top: 0px; line-height: 26px; letter-spacing: 0.099px;">Connected to localhost (6.10.17)</div>
  </div>
</div>

</body></html>
